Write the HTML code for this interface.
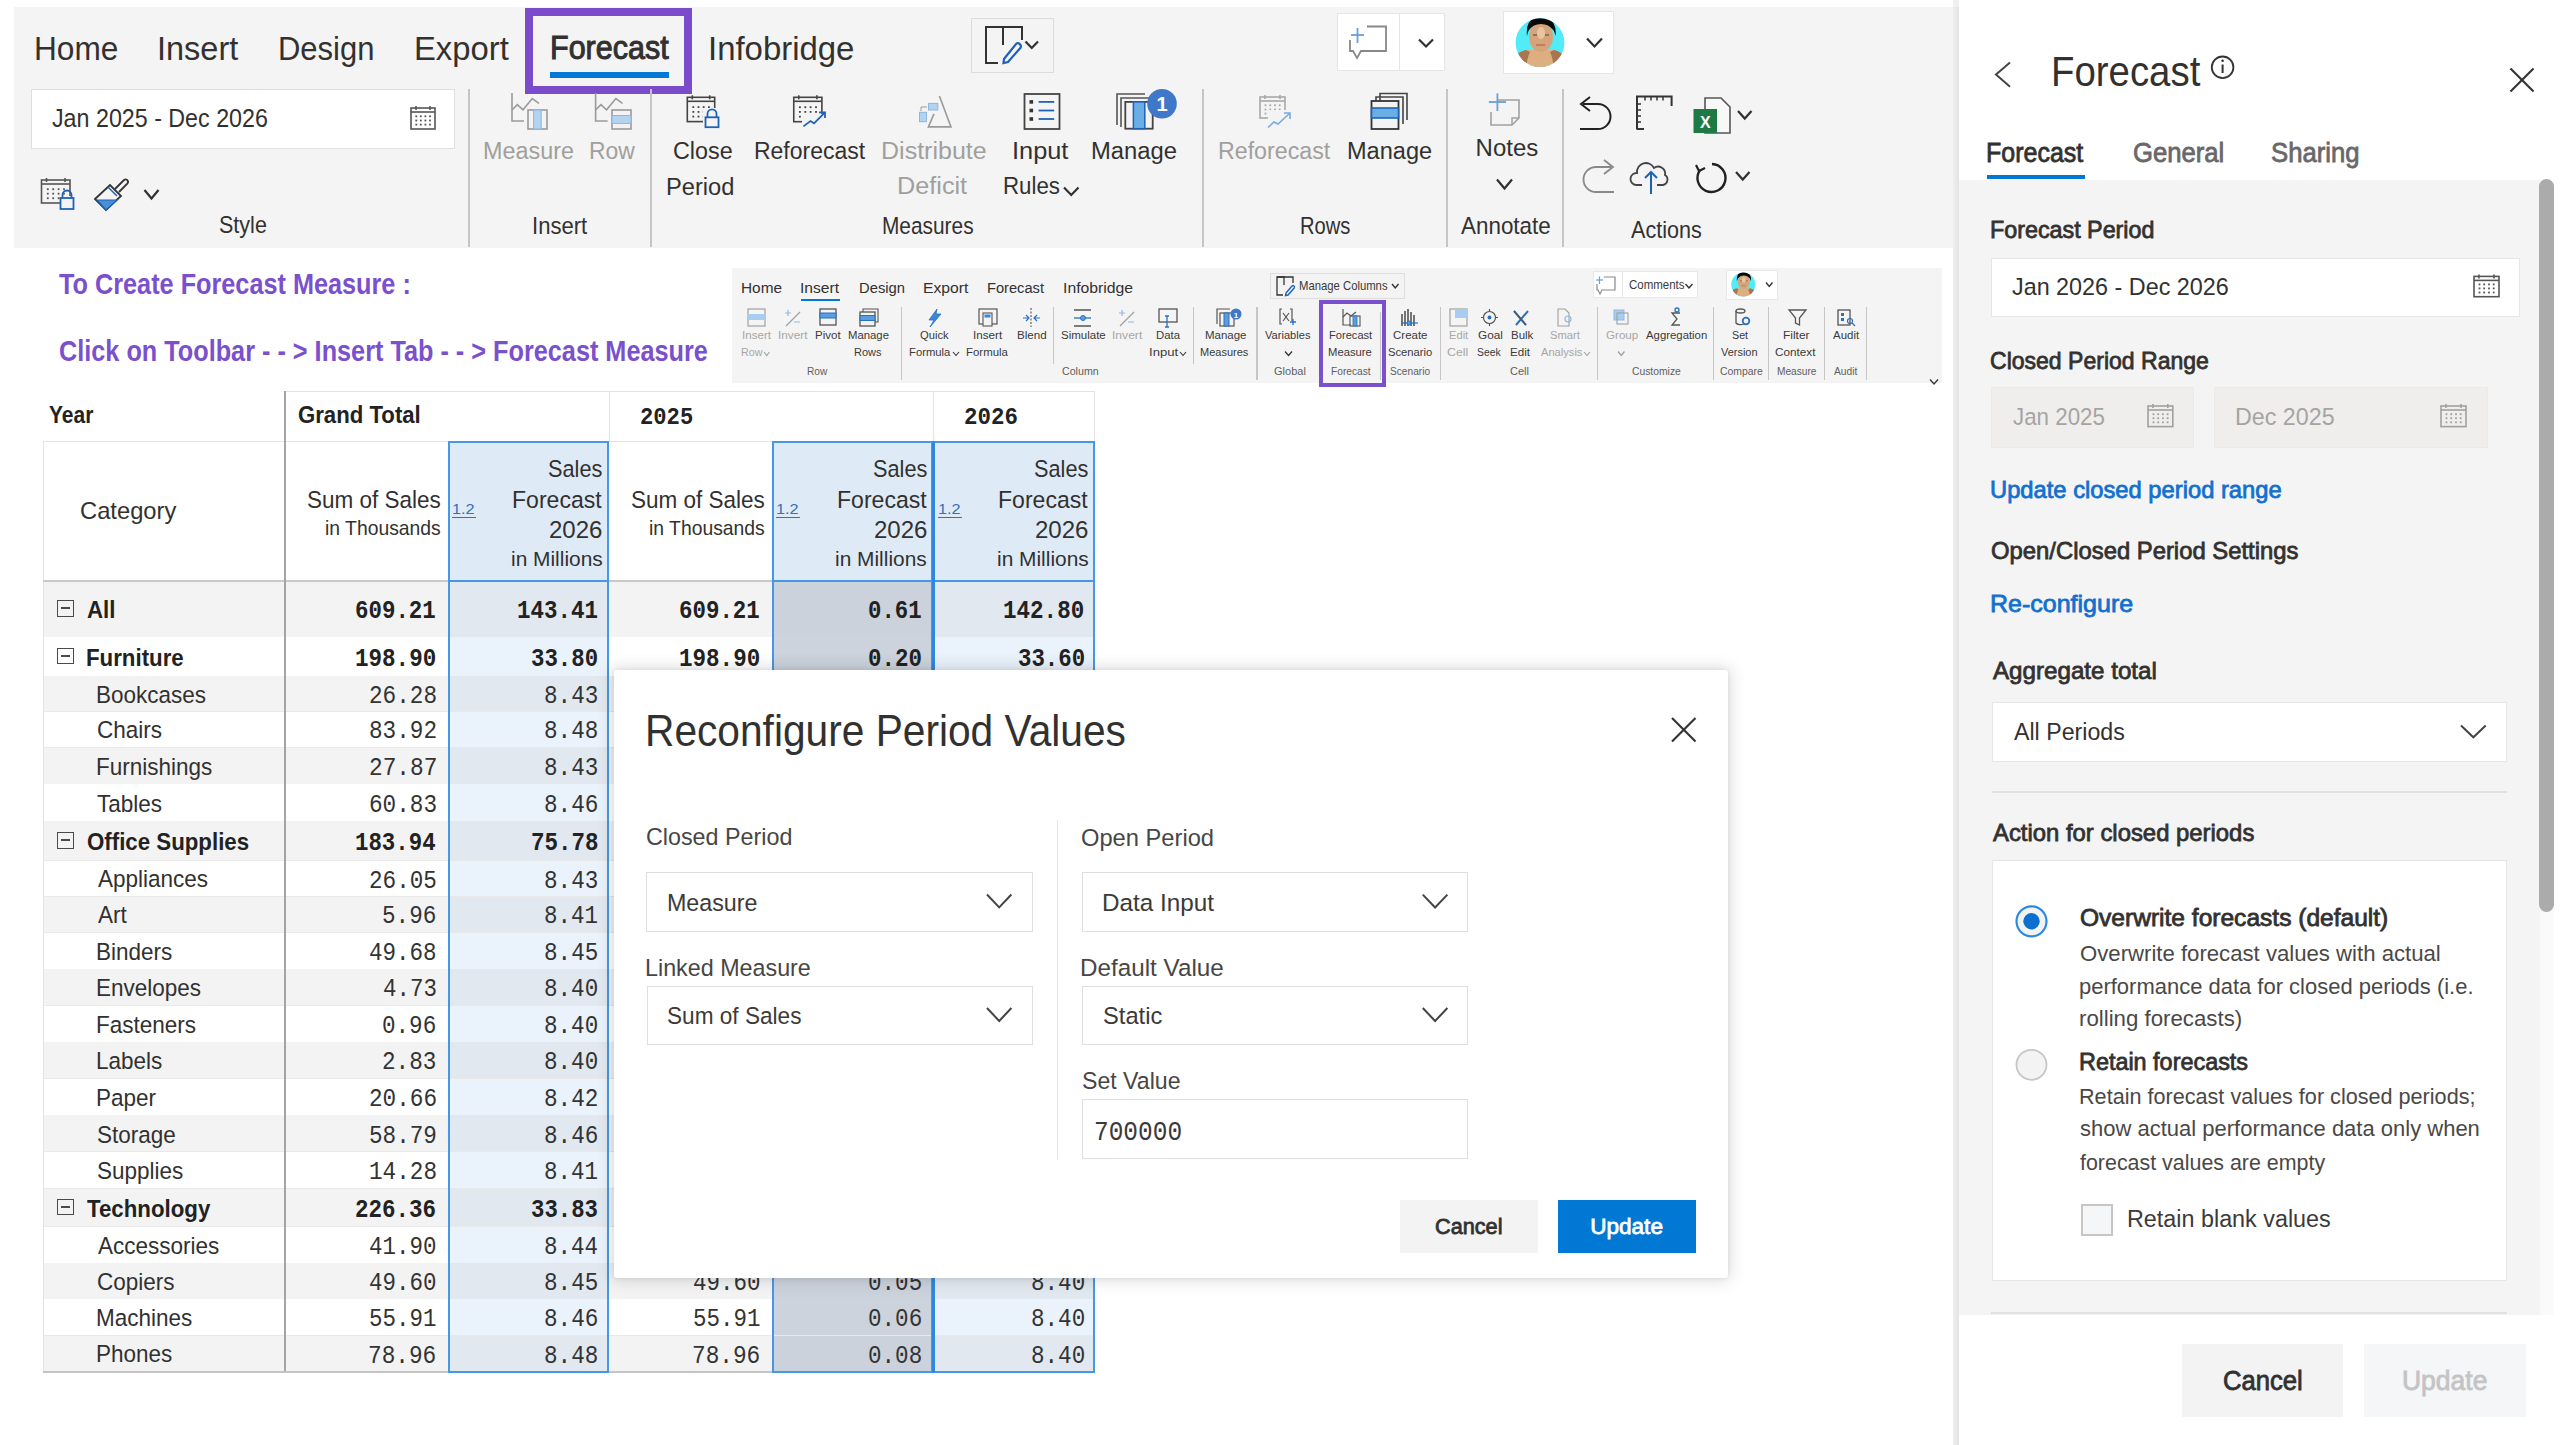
<!DOCTYPE html>
<html><head><meta charset="utf-8"><title>Forecast</title>
<style>
html,body{margin:0;padding:0;width:2560px;height:1445px;overflow:hidden;background:#ffffff;}
body{position:relative;font-family:"Liberation Sans",sans-serif;}
.t{position:absolute;white-space:nowrap;line-height:1;transform-origin:0 0;}
.r{position:absolute;}
</style></head><body>
<div class="r" style="left:14.0px;top:7.0px;width:1939.0px;height:241.0px;background:#f4f4f4;"></div>
<div class="t" style="left:34.0px;top:32.0px;font-size:33.43px;color:#323130;transform:scaleX(0.946);">Home</div>
<div class="t" style="left:157.0px;top:32.0px;font-size:33.43px;color:#323130;transform:scaleX(0.972);">Insert</div>
<div class="t" style="left:278.4px;top:32.0px;font-size:33.43px;color:#323130;transform:scaleX(0.927);">Design</div>
<div class="t" style="left:413.5px;top:32.0px;font-size:33.43px;color:#323130;transform:scaleX(0.981);">Export</div>
<div class="t" style="left:549.5px;top:31.7px;font-size:32.85px;color:#323130;transform:scaleX(0.929);-webkit-text-stroke:1.0px #323130;">Forecast</div>
<div class="t" style="left:708.0px;top:32.0px;font-size:33.43px;color:#323130;transform:scaleX(0.985);">Infobridge</div>
<div class="r" style="left:550.0px;top:72.3px;width:119.0px;height:5.4px;background:#0078d4;"></div>
<div class="r" style="left:524.5px;top:8.2px;width:167.5px;height:85.6px;border:8px solid #7a4bcb;box-sizing:border-box;"></div>
<div class="r" style="left:31.0px;top:89.0px;width:424.0px;height:60.0px;background:#ffffff;border:1px solid #e1dfdd;box-sizing:border-box;"></div>
<div class="t" style="left:52.2px;top:106.4px;font-size:25.44px;color:#323130;transform:scaleX(0.914);">Jan 2025 - Dec 2026</div>
<div class="r" style="left:467.5px;top:89.0px;width:2.0px;height:158.0px;background:#c8c6c4;"></div>
<div class="r" style="left:650.0px;top:89.0px;width:2.0px;height:158.0px;background:#c8c6c4;"></div>
<div class="r" style="left:1202.0px;top:89.0px;width:2.0px;height:158.0px;background:#c8c6c4;"></div>
<div class="r" style="left:1445.5px;top:89.0px;width:2.0px;height:158.0px;background:#c8c6c4;"></div>
<div class="r" style="left:1561.5px;top:89.0px;width:2.0px;height:158.0px;background:#c8c6c4;"></div>
<div class="t" style="left:219.0px;top:214.2px;font-size:23.26px;color:#323130;transform:scaleX(0.926);">Style</div>
<div class="t" style="left:483.1px;top:138.6px;font-size:23.98px;color:#a19f9d;transform:scaleX(0.975);">Measure</div>
<div class="t" style="left:589.1px;top:138.6px;font-size:23.98px;color:#a19f9d;transform:scaleX(0.956);">Row</div>
<div class="t" style="left:532.0px;top:214.6px;font-size:23.26px;color:#323130;transform:scaleX(0.950);">Insert</div>
<div class="t" style="left:672.8px;top:138.6px;font-size:23.98px;color:#323130;transform:scaleX(0.974);">Close</div>
<div class="t" style="left:666.0px;top:174.9px;font-size:23.98px;color:#323130;transform:scaleX(0.987);">Period</div>
<div class="t" style="left:754.1px;top:138.6px;font-size:23.98px;color:#323130;transform:scaleX(0.958);">Reforecast</div>
<div class="t" style="left:881.3px;top:139.0px;font-size:23.98px;color:#a19f9d;transform:scaleX(1.044);">Distribute</div>
<div class="t" style="left:896.6px;top:174.1px;font-size:23.98px;color:#a19f9d;transform:scaleX(1.053);">Deficit</div>
<div class="t" style="left:1012.4px;top:139.0px;font-size:23.98px;color:#323130;transform:scaleX(1.058);">Input</div>
<div class="t" style="left:1002.8px;top:174.1px;font-size:23.98px;color:#323130;transform:scaleX(0.930);">Rules</div>
<div class="t" style="left:1091.0px;top:139.0px;font-size:23.98px;color:#323130;transform:scaleX(0.992);">Manage</div>
<div class="t" style="left:881.7px;top:214.6px;font-size:23.26px;color:#323130;transform:scaleX(0.897);">Measures</div>
<div class="t" style="left:1217.8px;top:139.0px;font-size:23.98px;color:#a19f9d;transform:scaleX(0.968);">Reforecast</div>
<div class="t" style="left:1346.7px;top:139.0px;font-size:23.98px;color:#323130;transform:scaleX(0.982);">Manage</div>
<div class="t" style="left:1300.1px;top:214.6px;font-size:23.26px;color:#323130;transform:scaleX(0.866);">Rows</div>
<div class="t" style="left:1475.6px;top:136.0px;font-size:23.98px;color:#323130;">Notes</div>
<div class="t" style="left:1460.9px;top:214.8px;font-size:23.26px;color:#323130;transform:scaleX(0.964);">Annotate</div>
<div class="t" style="left:1630.9px;top:218.9px;font-size:23.26px;color:#323130;transform:scaleX(0.928);">Actions</div>
<div class="r" style="left:970.6px;top:18.3px;width:83.0px;height:54.7px;background:#f4f4f4;border:1px solid #dcdcdc;box-sizing:border-box;"></div>
<div class="r" style="left:1337.0px;top:13.4px;width:107.7px;height:58.1px;background:#ffffff;border:1px solid #e5e5e5;box-sizing:border-box;"></div>
<div class="r" style="left:1398.5px;top:13.4px;width:1.0px;height:58.1px;background:#e5e5e5;"></div>
<div class="r" style="left:1503.0px;top:11.2px;width:110.7px;height:62.8px;background:#ffffff;border:1px solid #e5e5e5;box-sizing:border-box;"></div>
<svg class="r" style="left:0;top:0" width="1960" height="260" viewBox="0 0 1960 260" fill="none"><rect x="411" y="108" width="24" height="21" stroke="#555" stroke-width="1.6" fill="none"/><line x1="411" y1="112" x2="435" y2="112" stroke="#555" stroke-width="1.6"/><line x1="416" y1="106" x2="416" y2="110" stroke="#555" stroke-width="1.6"/><line x1="430" y1="106" x2="430" y2="110" stroke="#555" stroke-width="1.6"/><rect x="415.4" y="115.4" width="1.8" height="1.8" fill="#555"/><rect x="415.4" y="119.6" width="1.8" height="1.8" fill="#555"/><rect x="415.4" y="123.7" width="1.8" height="1.8" fill="#555"/><rect x="419.9" y="115.4" width="1.8" height="1.8" fill="#555"/><rect x="419.9" y="119.6" width="1.8" height="1.8" fill="#555"/><rect x="419.9" y="123.7" width="1.8" height="1.8" fill="#555"/><rect x="424.5" y="115.4" width="1.8" height="1.8" fill="#555"/><rect x="424.5" y="119.6" width="1.8" height="1.8" fill="#555"/><rect x="424.5" y="123.7" width="1.8" height="1.8" fill="#555"/><rect x="429.1" y="115.4" width="1.8" height="1.8" fill="#555"/><rect x="429.1" y="119.6" width="1.8" height="1.8" fill="#555"/><rect x="429.1" y="123.7" width="1.8" height="1.8" fill="#555"/><rect x="41.5" y="180" width="28.5" height="23" stroke="#555" stroke-width="1.6" fill="none"/><line x1="41.5" y1="184" x2="70" y2="184" stroke="#555" stroke-width="1.6"/><line x1="46.5" y1="178" x2="46.5" y2="182" stroke="#555" stroke-width="1.6"/><line x1="65" y1="178" x2="65" y2="182" stroke="#555" stroke-width="1.6"/><rect x="46.9" y="188.3" width="1.8" height="1.8" fill="#555"/><rect x="46.9" y="192.8" width="1.8" height="1.8" fill="#555"/><rect x="46.9" y="197.3" width="1.8" height="1.8" fill="#555"/><rect x="52.3" y="188.3" width="1.8" height="1.8" fill="#555"/><rect x="52.3" y="192.8" width="1.8" height="1.8" fill="#555"/><rect x="52.3" y="197.3" width="1.8" height="1.8" fill="#555"/><rect x="57.7" y="188.3" width="1.8" height="1.8" fill="#555"/><rect x="57.7" y="192.8" width="1.8" height="1.8" fill="#555"/><rect x="57.7" y="197.3" width="1.8" height="1.8" fill="#555"/><rect x="63.1" y="188.3" width="1.8" height="1.8" fill="#555"/><rect x="63.1" y="192.8" width="1.8" height="1.8" fill="#555"/><rect x="63.1" y="197.3" width="1.8" height="1.8" fill="#555"/><rect x="60" y="196" width="13" height="13" fill="#f3f3f3"/><rect x="60.5" y="198" width="13" height="11" stroke="#1e62b8" stroke-width="1.8" fill="none"/><path d="M62.5 198 v-3 a4.5 4.5 0 0 1 9 0 v3" stroke="#1e62b8" stroke-width="1.8" fill="none"/><path d="M95 199 L110 185 L121 196 L106 210 Z" stroke="#333" stroke-width="1.8" fill="none"/><path d="M97 200 L117 200 L106 210 Z" fill="#4a90d9" stroke="#1e62b8" stroke-width="1.2"/><path d="M115 189 L124 180 a2.5 2.5 0 0 1 3.5 3.5 L119 192" stroke="#333" stroke-width="1.8" fill="none"/><line x1="108" y1="187" x2="117" y2="196" stroke="#1e62b8" stroke-width="1.5"/><polyline points="144.5,190 151.5,198.5 158.5,190" stroke="#323130" stroke-width="2.2" fill="none"/><polyline points="512,93 512,121 524,121" stroke="#9a9a9a" stroke-width="1.6" fill="none"/><polyline points="512,110 517.3,104.7 523,109.8 532.3,98.6 538.9,103.3" stroke="#9a9a9a" stroke-width="1.6" fill="none"/><rect x="528" y="110" width="19" height="19" stroke="#9a9a9a" stroke-width="1.6" fill="#f3f3f3"/><rect x="533.6" y="110" width="7.6" height="19" fill="#b3d3f0" stroke="#8db6e2" stroke-width="1"/><polyline points="595.6,93 595.6,121 607.6,121" stroke="#9a9a9a" stroke-width="1.6" fill="none"/><polyline points="595.6,110 600.9,104.7 606.6,109.8 615.9,98.6 622.5,103.3" stroke="#9a9a9a" stroke-width="1.6" fill="none"/><rect x="612" y="110" width="19" height="19" stroke="#9a9a9a" stroke-width="1.6" fill="#f3f3f3"/><rect x="612" y="115.5" width="19" height="7.9" fill="#b3d3f0" stroke="#8db6e2" stroke-width="1"/><rect x="687.3" y="97.3" width="27.40000000000009" height="24.299999999999997" stroke="#444" stroke-width="1.6" fill="none"/><line x1="687.3" y1="101.3" x2="714.7" y2="101.3" stroke="#444" stroke-width="1.6"/><line x1="692.3" y1="95.3" x2="692.3" y2="99.3" stroke="#444" stroke-width="1.6"/><line x1="709.7" y1="95.3" x2="709.7" y2="99.3" stroke="#444" stroke-width="1.6"/><rect x="692.4" y="106.2" width="1.8" height="1.8" fill="#444"/><rect x="692.4" y="111.0" width="1.8" height="1.8" fill="#444"/><rect x="692.4" y="115.7" width="1.8" height="1.8" fill="#444"/><rect x="697.6" y="106.2" width="1.8" height="1.8" fill="#444"/><rect x="697.6" y="111.0" width="1.8" height="1.8" fill="#444"/><rect x="697.6" y="115.7" width="1.8" height="1.8" fill="#444"/><rect x="702.8" y="106.2" width="1.8" height="1.8" fill="#444"/><rect x="702.8" y="111.0" width="1.8" height="1.8" fill="#444"/><rect x="702.8" y="115.7" width="1.8" height="1.8" fill="#444"/><rect x="708.0" y="106.2" width="1.8" height="1.8" fill="#444"/><rect x="708.0" y="111.0" width="1.8" height="1.8" fill="#444"/><rect x="708.0" y="115.7" width="1.8" height="1.8" fill="#444"/><rect x="703" y="108" width="17" height="20" fill="#f3f3f3"/><rect x="705.5" y="117.3" width="13" height="9.9" stroke="#1e62b8" stroke-width="1.8" fill="none"/><path d="M707.5 117.3 v-3.5 a4.5 4.5 0 0 1 9 0 v3.5" stroke="#1e62b8" stroke-width="1.8" fill="none"/><rect x="793.75" y="97.3" width="28.149999999999977" height="24.400000000000006" stroke="#444" stroke-width="1.6" fill="none"/><line x1="793.75" y1="101.3" x2="821.9" y2="101.3" stroke="#444" stroke-width="1.6"/><line x1="798.75" y1="95.3" x2="798.75" y2="99.3" stroke="#444" stroke-width="1.6"/><line x1="816.9" y1="95.3" x2="816.9" y2="99.3" stroke="#444" stroke-width="1.6"/><rect x="799.0" y="106.3" width="1.8" height="1.8" fill="#444"/><rect x="799.0" y="111.0" width="1.8" height="1.8" fill="#444"/><rect x="799.0" y="115.8" width="1.8" height="1.8" fill="#444"/><rect x="804.4" y="106.3" width="1.8" height="1.8" fill="#444"/><rect x="804.4" y="111.0" width="1.8" height="1.8" fill="#444"/><rect x="804.4" y="115.8" width="1.8" height="1.8" fill="#444"/><rect x="809.7" y="106.3" width="1.8" height="1.8" fill="#444"/><rect x="809.7" y="111.0" width="1.8" height="1.8" fill="#444"/><rect x="809.7" y="115.8" width="1.8" height="1.8" fill="#444"/><rect x="815.1" y="106.3" width="1.8" height="1.8" fill="#444"/><rect x="815.1" y="111.0" width="1.8" height="1.8" fill="#444"/><rect x="815.1" y="115.8" width="1.8" height="1.8" fill="#444"/><path d="M802 114 L826 114 L826 128 L802 128 Z" fill="#f3f3f3"/><polyline points="803.4,126.4 810.5,121 814,123.3 825,112.3" stroke="#1e62b8" stroke-width="1.8" fill="none"/><polyline points="819,112.3 825,112.3 825,118" stroke="#1e62b8" stroke-width="1.8" fill="none"/><path d="M939.4 96 L951 126.9 L928.4 126.9 L934 113.9" stroke="#9a9a9a" stroke-width="1.6" fill="none"/><rect x="928.5" y="103.4" width="9.3" height="6.6" fill="#b3d3f0" stroke="#8db6e2"/><rect x="919.5" y="112.3" width="7" height="9.4" fill="#b3d3f0" stroke="#8db6e2"/><path d="M921 111 v-4 h6" stroke="#9a9a9a" stroke-width="1"/><rect x="1024.5" y="94" width="35" height="35" stroke="#444" stroke-width="1.8" fill="none"/><rect x="1029.5" y="100.10000000000001" width="3.6" height="3.6" fill="#333"/><line x1="1038.6" y1="101.9" x2="1054.2" y2="101.9" stroke="#1e62b8" stroke-width="1.8"/><rect x="1029.5" y="108.7" width="3.6" height="3.6" fill="#333"/><line x1="1038.6" y1="110.5" x2="1054.2" y2="110.5" stroke="#1e62b8" stroke-width="1.8"/><rect x="1029.5" y="117.2" width="3.6" height="3.6" fill="#333"/><line x1="1038.6" y1="119" x2="1054.2" y2="119" stroke="#1e62b8" stroke-width="1.8"/><path d="M1117 125 V94 H1145" stroke="#555" stroke-width="1.6"/><path d="M1121 127 V98 H1149" stroke="#555" stroke-width="1.6"/><rect x="1125.3" y="101.9" width="27.4" height="26.8" stroke="#444" stroke-width="1.8" fill="#f3f3f3"/><rect x="1133.4" y="101.9" width="11.4" height="26.8" fill="#6aaee6" stroke="#1e62b8" stroke-width="1.5"/><circle cx="1162" cy="103.75" r="14.8" fill="#3f78c8"/><text x="1162" y="111" font-family="Liberation Sans" font-weight="700" font-size="20" fill="#fff" text-anchor="middle">1</text><path d="M1000 27 H986 V63 H998" stroke="#333" stroke-width="2" fill="none"/><path d="M986 27 H1022 V40" stroke="#333" stroke-width="2" fill="none"/><line x1="1003" y1="27" x2="1003" y2="45" stroke="#333" stroke-width="2"/><path d="M1004 59 L1016 44 a3 3 0 0 1 4.5 3.8 L1008 62 L1003.5 63 Z" stroke="#1e62b8" stroke-width="2.2" fill="none"/><polyline points="1025.5,41.5 1031.75,48 1038,41.5" stroke="#323130" stroke-width="2.2" fill="none"/><path d="M1367 26.5 H1386 V51 H1361 L1357 58 L1353 51 H1350 V40" stroke="#888" stroke-width="1.8" fill="none"/><line x1="1351" y1="35" x2="1364" y2="35" stroke="#6a9fd8" stroke-width="1.8"/><line x1="1357.5" y1="28" x2="1357.5" y2="43" stroke="#6a9fd8" stroke-width="1.8"/><polyline points="1419,39.5 1426.0,46.5 1433,39.5" stroke="#323130" stroke-width="2.2" fill="none"/><clipPath id="avc"><circle cx="1540" cy="42.7" r="24.4"/></clipPath><g clip-path="url(#avc)"><rect x="1515" y="18" width="50" height="50" fill="#52ecf8"/><path d="M1510 70 Q1512 53 1528 50 L1552 50 Q1568 53 1570 70 Z" fill="#dcae80"/><path d="M1510 70 Q1512 53 1526 50 L1530 52 Q1526 60 1527 70Z" fill="#a87452"/><path d="M1570 70 Q1568 53 1554 50 L1550 52 Q1554 60 1553 70Z" fill="#a87452"/><path d="M1527 36 Q1525 17 1541 17 Q1557 17 1555.6 36 Q1553 24 1541 23.5 Q1529 24 1527 36Z" fill="#0a0808"/><ellipse cx="1541" cy="37" rx="12" ry="15" fill="#d6a47a"/><path d="M1529 30 Q1530 20 1541 21 Q1552 20 1553 30 Q1549 24 1541 24 Q1533 24 1529 30Z" fill="#0a0808"/><ellipse cx="1541" cy="33" rx="4" ry="6" fill="#e8c4a0"/><path d="M1536 45 h9" stroke="#b8705a" stroke-width="1.3"/><path d="M1533 35 h4 M1545 35 h4" stroke="#7a6050" stroke-width="1.4"/></g><polyline points="1587,38.5 1594.5,46.5 1602,38.5" stroke="#323130" stroke-width="2.2" fill="none"/><rect x="1260" y="97" width="25" height="21" stroke="#a8a8a8" stroke-width="1.6" fill="none"/><line x1="1260" y1="101" x2="1285" y2="101" stroke="#a8a8a8" stroke-width="1.6"/><line x1="1265" y1="95" x2="1265" y2="99" stroke="#a8a8a8" stroke-width="1.6"/><line x1="1280" y1="95" x2="1280" y2="99" stroke="#a8a8a8" stroke-width="1.6"/><rect x="1264.6" y="104.4" width="1.8" height="1.8" fill="#a8a8a8"/><rect x="1264.6" y="108.6" width="1.8" height="1.8" fill="#a8a8a8"/><rect x="1264.6" y="112.7" width="1.8" height="1.8" fill="#a8a8a8"/><rect x="1269.3" y="104.4" width="1.8" height="1.8" fill="#a8a8a8"/><rect x="1269.3" y="108.6" width="1.8" height="1.8" fill="#a8a8a8"/><rect x="1269.3" y="112.7" width="1.8" height="1.8" fill="#a8a8a8"/><rect x="1274.1" y="104.4" width="1.8" height="1.8" fill="#a8a8a8"/><rect x="1274.1" y="108.6" width="1.8" height="1.8" fill="#a8a8a8"/><rect x="1274.1" y="112.7" width="1.8" height="1.8" fill="#a8a8a8"/><rect x="1278.8" y="104.4" width="1.8" height="1.8" fill="#a8a8a8"/><rect x="1278.8" y="108.6" width="1.8" height="1.8" fill="#a8a8a8"/><rect x="1278.8" y="112.7" width="1.8" height="1.8" fill="#a8a8a8"/><rect x="1268" y="110" width="24" height="19" fill="#f3f3f3"/><polyline points="1268,127.5 1274,122 1278,124 1290,113" stroke="#7aaae0" stroke-width="1.6" fill="none"/><polyline points="1284,113 1290,113 1290,119" stroke="#7aaae0" stroke-width="1.6" fill="none"/><path d="M1380 124 V93.5 H1407 V120" stroke="#444" stroke-width="1.6" fill="none"/><path d="M1376 126 V97 H1403 V124" stroke="#444" stroke-width="1.6" fill="none"/><rect x="1371.5" y="101" width="27" height="28" stroke="#333" stroke-width="1.8" fill="#f3f3f3"/><rect x="1371.5" y="108" width="27" height="10" fill="#6aaee6" stroke="#1e62b8" stroke-width="1.6"/><path d="M1498 100 H1519 V118 L1512 125 H1491 V112" stroke="#a0a0a0" stroke-width="1.6" fill="none"/><path d="M1512 125 V118 H1519" stroke="#a0a0a0" stroke-width="1.4" fill="none"/><line x1="1488.8" y1="102" x2="1506" y2="102" stroke="#6a9fd8" stroke-width="1.8"/><line x1="1497.4" y1="93.4" x2="1497.4" y2="111" stroke="#6a9fd8" stroke-width="1.8"/><polyline points="1497,179.5 1504.5,188.5 1512,179.5" stroke="#323130" stroke-width="2.2" fill="none"/><path d="M1583 104 H1598 A12.5 12.5 0 0 1 1598 129 H1580" stroke="#222" stroke-width="2" fill="none"/><polyline points="1590,97 1581,104 1590,111" stroke="#222" stroke-width="2" fill="none"/><path d="M1637 129.6 V96.5 H1671.6 V106" stroke="#333" stroke-width="2" fill="none"/><line x1="1637" y1="129" x2="1644" y2="129" stroke="#333" stroke-width="2"/><line x1="1645" y1="96.5" x2="1645" y2="100.5" stroke="#333" stroke-width="1.5"/><line x1="1651" y1="96.5" x2="1651" y2="100.5" stroke="#333" stroke-width="1.5"/><line x1="1657" y1="96.5" x2="1657" y2="100.5" stroke="#333" stroke-width="1.5"/><line x1="1663" y1="96.5" x2="1663" y2="100.5" stroke="#333" stroke-width="1.5"/><line x1="1637" y1="104" x2="1641" y2="104" stroke="#333" stroke-width="1.5"/><line x1="1637" y1="110" x2="1641" y2="110" stroke="#333" stroke-width="1.5"/><line x1="1637" y1="116" x2="1641" y2="116" stroke="#333" stroke-width="1.5"/><line x1="1637" y1="122" x2="1641" y2="122" stroke="#333" stroke-width="1.5"/><path d="M1705 98 H1721 L1730 107 V133 H1705 Z" stroke="#555" stroke-width="1.6" fill="#f8f8f8"/><rect x="1693.5" y="109" width="23.5" height="24" fill="#1d7a45"/><text x="1705.3" y="127.5" font-family="Liberation Sans" font-weight="700" font-size="16" fill="#fff" text-anchor="middle">X</text><polyline points="1738,111 1744.75,118.5 1751.5,111" stroke="#323130" stroke-width="2.2" fill="none"/><path d="M1611 167 H1596 A12.5 12.5 0 0 0 1596 192 H1614" stroke="#888" stroke-width="1.8" fill="none"/><polyline points="1604,160 1613,167 1604,174" stroke="#888" stroke-width="1.8" fill="none"/><path d="M1642 185 H1636 A6 6 0 0 1 1637 173 A9 9 0 0 1 1654 168 A7 7 0 0 1 1665 175 A5.5 5.5 0 0 1 1663 185 H1657" stroke="#444" stroke-width="1.8" fill="none"/><line x1="1651" y1="172" x2="1651" y2="194" stroke="#1e62b8" stroke-width="2"/><polyline points="1645,178 1651,172 1657,178" stroke="#1e62b8" stroke-width="2" fill="none"/><path d="M1700 170 A14 14 0 1 0 1712 164" stroke="#222" stroke-width="2.4" fill="none"/><polyline points="1696,165 1699,171 1705,168" stroke="#222" stroke-width="2.2" fill="none"/><polyline points="1736,172 1742.75,179.5 1749.5,172" stroke="#323130" stroke-width="2.2" fill="none"/><polyline points="1064,187.5 1071.25,195 1078.5,187.5" stroke="#323130" stroke-width="2.2" fill="none"/></svg>
<div class="r" style="left:1953.0px;top:0.0px;width:6.0px;height:1445.0px;background:linear-gradient(90deg,#eeeeee,#e4e4e4);"></div>
<div class="r" style="left:1953.0px;top:0.0px;width:6.0px;height:7.0px;background:#f0f0f0;"></div>
<div class="r" style="left:1959.0px;top:179.7px;width:581.0px;height:1135.3px;background:#f4f4f4;"></div>
<div class="r" style="left:2540.0px;top:179.7px;width:14.0px;height:1135.3px;background:#fafafa;"></div>
<div class="r" style="left:2539.0px;top:179.0px;width:15.0px;height:733.0px;background:#ababab;border-radius:7.5px;"></div>
<div class="t" style="left:2050.6px;top:51.2px;font-size:41.72px;color:#323130;transform:scaleX(0.920);">Forecast</div>
<div class="t" style="left:1986.3px;top:138.9px;font-size:28.05px;color:#323130;transform:scaleX(0.891);-webkit-text-stroke:0.8px #323130;">Forecast</div>
<div class="t" style="left:2132.5px;top:138.9px;font-size:28.05px;color:#69676a;transform:scaleX(0.915);-webkit-text-stroke:0.8px #69676a;">General</div>
<div class="t" style="left:2270.8px;top:138.9px;font-size:28.05px;color:#69676a;transform:scaleX(0.916);-webkit-text-stroke:0.8px #69676a;">Sharing</div>
<div class="r" style="left:1987.0px;top:174.9px;width:97.6px;height:4.3px;background:#0078d4;"></div>
<div class="t" style="left:1990.1px;top:217.6px;font-size:24.71px;color:#323130;transform:scaleX(0.943);-webkit-text-stroke:0.8px #323130;">Forecast Period</div>
<div class="r" style="left:1991.3px;top:257.5px;width:528.7px;height:59.8px;background:#ffffff;border:1px solid #e6e6e6;box-sizing:border-box;"></div>
<div class="t" style="left:2012.2px;top:275.0px;font-size:24.71px;color:#323130;transform:scaleX(0.945);">Jan 2026 - Dec 2026</div>
<div class="t" style="left:1990.4px;top:348.7px;font-size:24.71px;color:#323130;transform:scaleX(0.932);-webkit-text-stroke:0.8px #323130;">Closed Period Range</div>
<div class="r" style="left:1991.0px;top:387.3px;width:202.7px;height:60.4px;background:#efeeed;border:1px solid #eaeaea;box-sizing:border-box;"></div>
<div class="r" style="left:2214.3px;top:387.3px;width:274.2px;height:60.4px;background:#efeeed;border:1px solid #eaeaea;box-sizing:border-box;"></div>
<div class="t" style="left:2013.1px;top:405.0px;font-size:24.71px;color:#a6a4a2;transform:scaleX(0.904);">Jan 2025</div>
<div class="t" style="left:2235.1px;top:405.0px;font-size:24.71px;color:#a6a4a2;transform:scaleX(0.942);">Dec 2025</div>
<div class="t" style="left:1990.2px;top:477.6px;font-size:24.71px;color:#1170cf;transform:scaleX(0.961);-webkit-text-stroke:0.8px #1170cf;">Update closed period range</div>
<div class="t" style="left:1990.9px;top:539.2px;font-size:24.71px;color:#323130;transform:scaleX(0.965);-webkit-text-stroke:0.8px #323130;">Open/Closed Period Settings</div>
<div class="t" style="left:1989.9px;top:591.5px;font-size:24.71px;color:#1170cf;transform:scaleX(1.012);-webkit-text-stroke:0.8px #1170cf;">Re-configure</div>
<div class="t" style="left:1992.7px;top:658.7px;font-size:24.71px;color:#323130;transform:scaleX(0.978);-webkit-text-stroke:0.8px #323130;">Aggregate total</div>
<div class="r" style="left:1991.6px;top:702.0px;width:515.2px;height:59.7px;background:#ffffff;border:1px solid #e6e6e6;box-sizing:border-box;"></div>
<div class="t" style="left:2013.9px;top:720.2px;font-size:23.98px;color:#323130;transform:scaleX(0.967);">All Periods</div>
<div class="r" style="left:1992.0px;top:791.4px;width:515.0px;height:2.0px;background:#e1e1e1;"></div>
<div class="t" style="left:1992.7px;top:821.0px;font-size:24.71px;color:#323130;transform:scaleX(0.966);-webkit-text-stroke:0.8px #323130;">Action for closed periods</div>
<div class="r" style="left:1991.6px;top:860.4px;width:515.2px;height:420.8px;background:#ffffff;border:1px solid #e6e6e6;box-sizing:border-box;"></div>
<div class="t" style="left:2079.5px;top:906.1px;font-size:23.98px;color:#323130;transform:scaleX(1.024);-webkit-text-stroke:0.8px #323130;">Overwrite forecasts (default)</div>
<div class="t" style="left:2079.6px;top:942.9px;font-size:22.53px;color:#4a4846;transform:scaleX(0.984);">Overwrite forecast values with actual</div>
<div class="t" style="left:2079.3px;top:976.1px;font-size:22.53px;color:#4a4846;transform:scaleX(0.976);">performance data for closed periods (i.e.</div>
<div class="t" style="left:2079.3px;top:1008.4px;font-size:22.53px;color:#4a4846;transform:scaleX(0.988);">rolling forecasts)</div>
<div class="t" style="left:2078.8px;top:1050.2px;font-size:23.98px;color:#323130;transform:scaleX(0.976);-webkit-text-stroke:0.8px #323130;">Retain forecasts</div>
<div class="t" style="left:2078.9px;top:1085.8px;font-size:22.53px;color:#4a4846;transform:scaleX(0.960);">Retain forecast values for closed periods;</div>
<div class="t" style="left:2080.1px;top:1118.4px;font-size:22.53px;color:#4a4846;transform:scaleX(0.977);">show actual performance data only when</div>
<div class="t" style="left:2080.4px;top:1152.4px;font-size:22.53px;color:#4a4846;transform:scaleX(0.951);">forecast values are empty</div>
<div class="r" style="left:2080.7px;top:1203.7px;width:32.1px;height:32.1px;background:#f5f6f8;border:2px solid #c8c6c4;box-sizing:border-box;"></div>
<div class="t" style="left:2127.3px;top:1207.2px;font-size:23.98px;color:#3b3a39;transform:scaleX(0.974);">Retain blank values</div>
<div class="r" style="left:1991.3px;top:1312.0px;width:515.7px;height:2.0px;background:#e1e1e1;"></div>
<div class="r" style="left:2181.5px;top:1344.0px;width:161.8px;height:73.3px;background:#f3f3f3;"></div>
<div class="t" style="left:2223.3px;top:1367.6px;font-size:27.03px;color:#323130;transform:scaleX(0.949);-webkit-text-stroke:0.8px #323130;">Cancel</div>
<div class="r" style="left:2363.8px;top:1344.0px;width:162.2px;height:73.3px;background:#f5f6f8;"></div>
<div class="t" style="left:2401.7px;top:1367.6px;font-size:27.03px;color:#c4c4c4;transform:scaleX(0.980);-webkit-text-stroke:0.8px #c4c4c4;">Update</div>
<svg class="r" style="left:0;top:0" width="2560" height="1445" viewBox="0 0 2560 1445" fill="none"><polyline points="2010,62.5 1996,74.6 2010,86.7" stroke="#444" stroke-width="2" fill="none"/><circle cx="2222.6" cy="67.3" r="10.8" stroke="#333" stroke-width="1.8" fill="none"/><line x1="2222.6" y1="64.5" x2="2222.6" y2="73" stroke="#333" stroke-width="2"/><circle cx="2222.6" cy="60.8" r="1.3" fill="#333"/><line x1="2510.5" y1="68.5" x2="2533.5" y2="91.5" stroke="#333" stroke-width="2.2"/><line x1="2533.5" y1="68.5" x2="2510.5" y2="91.5" stroke="#333" stroke-width="2.2"/><rect x="2474" y="276.4" width="25" height="20.30000000000001" stroke="#555" stroke-width="1.6" fill="none"/><line x1="2474" y1="280.4" x2="2499" y2="280.4" stroke="#555" stroke-width="1.6"/><line x1="2479" y1="274.4" x2="2479" y2="278.4" stroke="#555" stroke-width="1.6"/><line x1="2494" y1="274.4" x2="2494" y2="278.4" stroke="#555" stroke-width="1.6"/><rect x="2478.6" y="283.5" width="1.8" height="1.8" fill="#555"/><rect x="2478.6" y="287.5" width="1.8" height="1.8" fill="#555"/><rect x="2478.6" y="291.6" width="1.8" height="1.8" fill="#555"/><rect x="2483.3" y="283.5" width="1.8" height="1.8" fill="#555"/><rect x="2483.3" y="287.5" width="1.8" height="1.8" fill="#555"/><rect x="2483.3" y="291.6" width="1.8" height="1.8" fill="#555"/><rect x="2488.1" y="283.5" width="1.8" height="1.8" fill="#555"/><rect x="2488.1" y="287.5" width="1.8" height="1.8" fill="#555"/><rect x="2488.1" y="291.6" width="1.8" height="1.8" fill="#555"/><rect x="2492.8" y="283.5" width="1.8" height="1.8" fill="#555"/><rect x="2492.8" y="287.5" width="1.8" height="1.8" fill="#555"/><rect x="2492.8" y="291.6" width="1.8" height="1.8" fill="#555"/><rect x="2148" y="406" width="24.800000000000182" height="20.600000000000023" stroke="#a0a0a0" stroke-width="1.6" fill="none"/><line x1="2148" y1="410" x2="2172.8" y2="410" stroke="#a0a0a0" stroke-width="1.6"/><line x1="2153" y1="404" x2="2153" y2="408" stroke="#a0a0a0" stroke-width="1.6"/><line x1="2167.8" y1="404" x2="2167.8" y2="408" stroke="#a0a0a0" stroke-width="1.6"/><rect x="2152.6" y="413.3" width="1.8" height="1.8" fill="#a0a0a0"/><rect x="2152.6" y="417.3" width="1.8" height="1.8" fill="#a0a0a0"/><rect x="2152.6" y="421.4" width="1.8" height="1.8" fill="#a0a0a0"/><rect x="2157.3" y="413.3" width="1.8" height="1.8" fill="#a0a0a0"/><rect x="2157.3" y="417.3" width="1.8" height="1.8" fill="#a0a0a0"/><rect x="2157.3" y="421.4" width="1.8" height="1.8" fill="#a0a0a0"/><rect x="2162.0" y="413.3" width="1.8" height="1.8" fill="#a0a0a0"/><rect x="2162.0" y="417.3" width="1.8" height="1.8" fill="#a0a0a0"/><rect x="2162.0" y="421.4" width="1.8" height="1.8" fill="#a0a0a0"/><rect x="2166.7" y="413.3" width="1.8" height="1.8" fill="#a0a0a0"/><rect x="2166.7" y="417.3" width="1.8" height="1.8" fill="#a0a0a0"/><rect x="2166.7" y="421.4" width="1.8" height="1.8" fill="#a0a0a0"/><rect x="2441" y="406" width="25" height="20.600000000000023" stroke="#a0a0a0" stroke-width="1.6" fill="none"/><line x1="2441" y1="410" x2="2466" y2="410" stroke="#a0a0a0" stroke-width="1.6"/><line x1="2446" y1="404" x2="2446" y2="408" stroke="#a0a0a0" stroke-width="1.6"/><line x1="2461" y1="404" x2="2461" y2="408" stroke="#a0a0a0" stroke-width="1.6"/><rect x="2445.6" y="413.3" width="1.8" height="1.8" fill="#a0a0a0"/><rect x="2445.6" y="417.3" width="1.8" height="1.8" fill="#a0a0a0"/><rect x="2445.6" y="421.4" width="1.8" height="1.8" fill="#a0a0a0"/><rect x="2450.3" y="413.3" width="1.8" height="1.8" fill="#a0a0a0"/><rect x="2450.3" y="417.3" width="1.8" height="1.8" fill="#a0a0a0"/><rect x="2450.3" y="421.4" width="1.8" height="1.8" fill="#a0a0a0"/><rect x="2455.1" y="413.3" width="1.8" height="1.8" fill="#a0a0a0"/><rect x="2455.1" y="417.3" width="1.8" height="1.8" fill="#a0a0a0"/><rect x="2455.1" y="421.4" width="1.8" height="1.8" fill="#a0a0a0"/><rect x="2459.8" y="413.3" width="1.8" height="1.8" fill="#a0a0a0"/><rect x="2459.8" y="417.3" width="1.8" height="1.8" fill="#a0a0a0"/><rect x="2459.8" y="421.4" width="1.8" height="1.8" fill="#a0a0a0"/><polyline points="2461,725.5 2473.35,737.3 2485.7,725.5" stroke="#444" stroke-width="2" fill="none"/><circle cx="2031.5" cy="921.3" r="15" stroke="#2a8ae0" stroke-width="2.2" fill="#f2f2f2"/><circle cx="2031.5" cy="921.3" r="8.2" fill="#0b6fd0"/><circle cx="2031.5" cy="1064.8" r="15" stroke="#c8c6c4" stroke-width="1.8" fill="#f3f3f3"/></svg>
<div class="r" style="left:285.0px;top:391.0px;width:810.0px;height:1.0px;background:#e3e3e3;"></div>
<div class="r" style="left:609.0px;top:391.0px;width:1.0px;height:50.0px;background:#e3e3e3;"></div>
<div class="r" style="left:933.0px;top:391.0px;width:1.0px;height:50.0px;background:#e3e3e3;"></div>
<div class="r" style="left:1094.0px;top:391.0px;width:1.0px;height:50.0px;background:#e3e3e3;"></div>
<div class="t" style="left:49.3px;top:403.9px;font-size:23.69px;font-weight:700;color:#222222;transform:scaleX(0.886);">Year</div>
<div class="t" style="left:298.4px;top:403.9px;font-size:23.69px;font-weight:700;color:#222222;transform:scaleX(0.936);">Grand Total</div>
<div class="t" style="left:639.7px;top:404.7px;font-size:24.78px;font-family:'Liberation Mono',monospace;font-weight:700;color:#222222;transform:scaleX(0.895);">2025</div>
<div class="t" style="left:963.7px;top:405.0px;font-size:24.78px;font-family:'Liberation Mono',monospace;font-weight:700;color:#222222;transform:scaleX(0.906);">2026</div>
<div class="r" style="left:43.0px;top:441.0px;width:1052.0px;height:1.0px;background:#e3e3e3;"></div>
<div class="r" style="left:43.0px;top:441.0px;width:1.0px;height:931.0px;background:#e3e3e3;"></div>
<div class="t" style="left:80.0px;top:500.1px;font-size:23.40px;color:#323130;transform:scaleX(1.015);">Category</div>
<div class="t" style="left:306.7px;top:488.7px;font-size:23.55px;color:#323130;transform:scaleX(0.956);">Sum of Sales</div>
<div class="t" style="left:324.7px;top:517.8px;font-size:20.78px;color:#323130;transform:scaleX(0.931);">in Thousands</div>
<div class="t" style="left:630.7px;top:488.7px;font-size:23.55px;color:#323130;transform:scaleX(0.956);">Sum of Sales</div>
<div class="t" style="left:648.7px;top:517.8px;font-size:20.78px;color:#323130;transform:scaleX(0.931);">in Thousands</div>
<div class="r" style="left:44.0px;top:580.5px;width:1051.0px;height:56.9px;background:#f3f3f3;"></div>
<div class="r" style="left:448.0px;top:580.5px;width:161.0px;height:56.9px;background:#e1e8f0;"></div>
<div class="r" style="left:933.0px;top:580.5px;width:162.0px;height:56.9px;background:#e1e8f0;"></div>
<div class="r" style="left:772.0px;top:580.5px;width:161.0px;height:56.9px;background:#cbd2db;"></div>
<div class="r" style="left:44.0px;top:636.9px;width:1051.0px;height:1.0px;background:#e9e9e9;"></div>
<div class="r" style="left:44.0px;top:637.4px;width:1051.0px;height:38.8px;background:#ffffff;"></div>
<div class="r" style="left:448.0px;top:637.4px;width:161.0px;height:38.8px;background:#eaf2fb;"></div>
<div class="r" style="left:933.0px;top:637.4px;width:162.0px;height:38.8px;background:#eaf2fb;"></div>
<div class="r" style="left:772.0px;top:637.4px;width:161.0px;height:38.8px;background:#ccd3dc;"></div>
<div class="r" style="left:44.0px;top:675.7px;width:1051.0px;height:1.0px;background:#e9e9e9;"></div>
<div class="r" style="left:44.0px;top:676.2px;width:1051.0px;height:35.3px;background:#f3f3f3;"></div>
<div class="r" style="left:448.0px;top:676.2px;width:161.0px;height:35.3px;background:#e1e8f0;"></div>
<div class="r" style="left:933.0px;top:676.2px;width:162.0px;height:35.3px;background:#e1e8f0;"></div>
<div class="r" style="left:772.0px;top:676.2px;width:161.0px;height:35.3px;background:#cbd2db;"></div>
<div class="r" style="left:44.0px;top:711.0px;width:1051.0px;height:1.0px;background:#e9e9e9;"></div>
<div class="r" style="left:44.0px;top:711.5px;width:1051.0px;height:36.0px;background:#ffffff;"></div>
<div class="r" style="left:448.0px;top:711.5px;width:161.0px;height:36.0px;background:#eaf2fb;"></div>
<div class="r" style="left:933.0px;top:711.5px;width:162.0px;height:36.0px;background:#eaf2fb;"></div>
<div class="r" style="left:772.0px;top:711.5px;width:161.0px;height:36.0px;background:#ccd3dc;"></div>
<div class="r" style="left:44.0px;top:747.0px;width:1051.0px;height:1.0px;background:#e9e9e9;"></div>
<div class="r" style="left:44.0px;top:747.5px;width:1051.0px;height:36.9px;background:#f3f3f3;"></div>
<div class="r" style="left:448.0px;top:747.5px;width:161.0px;height:36.9px;background:#e1e8f0;"></div>
<div class="r" style="left:933.0px;top:747.5px;width:162.0px;height:36.9px;background:#e1e8f0;"></div>
<div class="r" style="left:772.0px;top:747.5px;width:161.0px;height:36.9px;background:#cbd2db;"></div>
<div class="r" style="left:44.0px;top:783.9px;width:1051.0px;height:1.0px;background:#e9e9e9;"></div>
<div class="r" style="left:44.0px;top:784.4px;width:1051.0px;height:36.9px;background:#ffffff;"></div>
<div class="r" style="left:448.0px;top:784.4px;width:161.0px;height:36.9px;background:#eaf2fb;"></div>
<div class="r" style="left:933.0px;top:784.4px;width:162.0px;height:36.9px;background:#eaf2fb;"></div>
<div class="r" style="left:772.0px;top:784.4px;width:161.0px;height:36.9px;background:#ccd3dc;"></div>
<div class="r" style="left:44.0px;top:820.8px;width:1051.0px;height:1.0px;background:#e9e9e9;"></div>
<div class="r" style="left:44.0px;top:821.3px;width:1051.0px;height:39.3px;background:#f3f3f3;"></div>
<div class="r" style="left:448.0px;top:821.3px;width:161.0px;height:39.3px;background:#e1e8f0;"></div>
<div class="r" style="left:933.0px;top:821.3px;width:162.0px;height:39.3px;background:#e1e8f0;"></div>
<div class="r" style="left:772.0px;top:821.3px;width:161.0px;height:39.3px;background:#cbd2db;"></div>
<div class="r" style="left:44.0px;top:860.1px;width:1051.0px;height:1.0px;background:#e9e9e9;"></div>
<div class="r" style="left:44.0px;top:860.6px;width:1051.0px;height:35.9px;background:#ffffff;"></div>
<div class="r" style="left:448.0px;top:860.6px;width:161.0px;height:35.9px;background:#eaf2fb;"></div>
<div class="r" style="left:933.0px;top:860.6px;width:162.0px;height:35.9px;background:#eaf2fb;"></div>
<div class="r" style="left:772.0px;top:860.6px;width:161.0px;height:35.9px;background:#ccd3dc;"></div>
<div class="r" style="left:44.0px;top:896.0px;width:1051.0px;height:1.0px;background:#e9e9e9;"></div>
<div class="r" style="left:44.0px;top:896.5px;width:1051.0px;height:36.0px;background:#f3f3f3;"></div>
<div class="r" style="left:448.0px;top:896.5px;width:161.0px;height:36.0px;background:#e1e8f0;"></div>
<div class="r" style="left:933.0px;top:896.5px;width:162.0px;height:36.0px;background:#e1e8f0;"></div>
<div class="r" style="left:772.0px;top:896.5px;width:161.0px;height:36.0px;background:#cbd2db;"></div>
<div class="r" style="left:44.0px;top:932.0px;width:1051.0px;height:1.0px;background:#e9e9e9;"></div>
<div class="r" style="left:44.0px;top:932.5px;width:1051.0px;height:36.6px;background:#ffffff;"></div>
<div class="r" style="left:448.0px;top:932.5px;width:161.0px;height:36.6px;background:#eaf2fb;"></div>
<div class="r" style="left:933.0px;top:932.5px;width:162.0px;height:36.6px;background:#eaf2fb;"></div>
<div class="r" style="left:772.0px;top:932.5px;width:161.0px;height:36.6px;background:#ccd3dc;"></div>
<div class="r" style="left:44.0px;top:968.6px;width:1051.0px;height:1.0px;background:#e9e9e9;"></div>
<div class="r" style="left:44.0px;top:969.1px;width:1051.0px;height:36.6px;background:#f3f3f3;"></div>
<div class="r" style="left:448.0px;top:969.1px;width:161.0px;height:36.6px;background:#e1e8f0;"></div>
<div class="r" style="left:933.0px;top:969.1px;width:162.0px;height:36.6px;background:#e1e8f0;"></div>
<div class="r" style="left:772.0px;top:969.1px;width:161.0px;height:36.6px;background:#cbd2db;"></div>
<div class="r" style="left:44.0px;top:1005.1px;width:1051.0px;height:1.0px;background:#e9e9e9;"></div>
<div class="r" style="left:44.0px;top:1005.6px;width:1051.0px;height:36.6px;background:#ffffff;"></div>
<div class="r" style="left:448.0px;top:1005.6px;width:161.0px;height:36.6px;background:#eaf2fb;"></div>
<div class="r" style="left:933.0px;top:1005.6px;width:162.0px;height:36.6px;background:#eaf2fb;"></div>
<div class="r" style="left:772.0px;top:1005.6px;width:161.0px;height:36.6px;background:#ccd3dc;"></div>
<div class="r" style="left:44.0px;top:1041.7px;width:1051.0px;height:1.0px;background:#e9e9e9;"></div>
<div class="r" style="left:44.0px;top:1042.2px;width:1051.0px;height:36.6px;background:#f3f3f3;"></div>
<div class="r" style="left:448.0px;top:1042.2px;width:161.0px;height:36.6px;background:#e1e8f0;"></div>
<div class="r" style="left:933.0px;top:1042.2px;width:162.0px;height:36.6px;background:#e1e8f0;"></div>
<div class="r" style="left:772.0px;top:1042.2px;width:161.0px;height:36.6px;background:#cbd2db;"></div>
<div class="r" style="left:44.0px;top:1078.3px;width:1051.0px;height:1.0px;background:#e9e9e9;"></div>
<div class="r" style="left:44.0px;top:1078.8px;width:1051.0px;height:36.6px;background:#ffffff;"></div>
<div class="r" style="left:448.0px;top:1078.8px;width:161.0px;height:36.6px;background:#eaf2fb;"></div>
<div class="r" style="left:933.0px;top:1078.8px;width:162.0px;height:36.6px;background:#eaf2fb;"></div>
<div class="r" style="left:772.0px;top:1078.8px;width:161.0px;height:36.6px;background:#ccd3dc;"></div>
<div class="r" style="left:44.0px;top:1114.9px;width:1051.0px;height:1.0px;background:#e9e9e9;"></div>
<div class="r" style="left:44.0px;top:1115.4px;width:1051.0px;height:36.6px;background:#f3f3f3;"></div>
<div class="r" style="left:448.0px;top:1115.4px;width:161.0px;height:36.6px;background:#e1e8f0;"></div>
<div class="r" style="left:933.0px;top:1115.4px;width:162.0px;height:36.6px;background:#e1e8f0;"></div>
<div class="r" style="left:772.0px;top:1115.4px;width:161.0px;height:36.6px;background:#cbd2db;"></div>
<div class="r" style="left:44.0px;top:1151.4px;width:1051.0px;height:1.0px;background:#e9e9e9;"></div>
<div class="r" style="left:44.0px;top:1151.9px;width:1051.0px;height:36.6px;background:#ffffff;"></div>
<div class="r" style="left:448.0px;top:1151.9px;width:161.0px;height:36.6px;background:#eaf2fb;"></div>
<div class="r" style="left:933.0px;top:1151.9px;width:162.0px;height:36.6px;background:#eaf2fb;"></div>
<div class="r" style="left:772.0px;top:1151.9px;width:161.0px;height:36.6px;background:#ccd3dc;"></div>
<div class="r" style="left:44.0px;top:1188.0px;width:1051.0px;height:1.0px;background:#e9e9e9;"></div>
<div class="r" style="left:44.0px;top:1188.5px;width:1051.0px;height:38.2px;background:#f3f3f3;"></div>
<div class="r" style="left:448.0px;top:1188.5px;width:161.0px;height:38.2px;background:#e1e8f0;"></div>
<div class="r" style="left:933.0px;top:1188.5px;width:162.0px;height:38.2px;background:#e1e8f0;"></div>
<div class="r" style="left:772.0px;top:1188.5px;width:161.0px;height:38.2px;background:#cbd2db;"></div>
<div class="r" style="left:44.0px;top:1226.2px;width:1051.0px;height:1.0px;background:#e9e9e9;"></div>
<div class="r" style="left:44.0px;top:1226.7px;width:1051.0px;height:36.2px;background:#ffffff;"></div>
<div class="r" style="left:448.0px;top:1226.7px;width:161.0px;height:36.2px;background:#eaf2fb;"></div>
<div class="r" style="left:933.0px;top:1226.7px;width:162.0px;height:36.2px;background:#eaf2fb;"></div>
<div class="r" style="left:772.0px;top:1226.7px;width:161.0px;height:36.2px;background:#ccd3dc;"></div>
<div class="r" style="left:44.0px;top:1262.5px;width:1051.0px;height:1.0px;background:#e9e9e9;"></div>
<div class="r" style="left:44.0px;top:1263.0px;width:1051.0px;height:36.2px;background:#f3f3f3;"></div>
<div class="r" style="left:448.0px;top:1263.0px;width:161.0px;height:36.2px;background:#e1e8f0;"></div>
<div class="r" style="left:933.0px;top:1263.0px;width:162.0px;height:36.2px;background:#e1e8f0;"></div>
<div class="r" style="left:772.0px;top:1263.0px;width:161.0px;height:36.2px;background:#cbd2db;"></div>
<div class="r" style="left:44.0px;top:1298.7px;width:1051.0px;height:1.0px;background:#e9e9e9;"></div>
<div class="r" style="left:44.0px;top:1299.2px;width:1051.0px;height:36.2px;background:#ffffff;"></div>
<div class="r" style="left:448.0px;top:1299.2px;width:161.0px;height:36.2px;background:#eaf2fb;"></div>
<div class="r" style="left:933.0px;top:1299.2px;width:162.0px;height:36.2px;background:#eaf2fb;"></div>
<div class="r" style="left:772.0px;top:1299.2px;width:161.0px;height:36.2px;background:#ccd3dc;"></div>
<div class="r" style="left:44.0px;top:1335.0px;width:1051.0px;height:1.0px;background:#e9e9e9;"></div>
<div class="r" style="left:44.0px;top:1335.5px;width:1051.0px;height:36.2px;background:#f3f3f3;"></div>
<div class="r" style="left:448.0px;top:1335.5px;width:161.0px;height:36.2px;background:#e1e8f0;"></div>
<div class="r" style="left:933.0px;top:1335.5px;width:162.0px;height:36.2px;background:#e1e8f0;"></div>
<div class="r" style="left:772.0px;top:1335.5px;width:161.0px;height:36.2px;background:#cbd2db;"></div>
<div class="r" style="left:44.0px;top:1371.2px;width:1051.0px;height:1.0px;background:#e9e9e9;"></div>
<div class="r" style="left:448.0px;top:441.0px;width:161.0px;height:139.5px;background:#deebf7;"></div>
<div class="r" style="left:772.0px;top:441.0px;width:161.0px;height:139.5px;background:#deebf7;"></div>
<div class="r" style="left:933.0px;top:441.0px;width:162.0px;height:139.5px;background:#deebf7;"></div>
<div class="r" style="left:43.0px;top:579.5px;width:1052.0px;height:2.0px;background:#c9c9c9;"></div>
<div class="r" style="left:284.2px;top:391.0px;width:1.6px;height:981.0px;background:#a4a4a4;"></div>
<div class="r" style="left:43.0px;top:1371.0px;width:1052.0px;height:2.0px;background:#c4c4c4;"></div>
<div class="r" style="left:448.0px;top:441.0px;width:161.0px;height:931.5px;border:2px solid #4498e6;box-sizing:border-box;"></div>
<div class="r" style="left:448.0px;top:579.5px;width:161.0px;height:2.0px;background:#4498e6;"></div>
<div class="r" style="left:772.0px;top:441.0px;width:161.0px;height:931.5px;border:2px solid #4498e6;box-sizing:border-box;"></div>
<div class="r" style="left:772.0px;top:579.5px;width:161.0px;height:2.0px;background:#4498e6;"></div>
<div class="r" style="left:933.0px;top:441.0px;width:162.0px;height:931.5px;border:2px solid #4498e6;box-sizing:border-box;"></div>
<div class="r" style="left:933.0px;top:579.5px;width:162.0px;height:2.0px;background:#4498e6;"></div>
<div class="r" style="left:932.0px;top:441.0px;width:2.5px;height:931.5px;background:#2f88e0;"></div>
<div class="t" style="left:548.0px;top:457.7px;font-size:23.26px;color:#323130;transform:scaleX(0.934);">Sales</div>
<div class="t" style="left:512.1px;top:488.7px;font-size:23.55px;color:#323130;transform:scaleX(0.979);">Forecast</div>
<div class="t" style="left:549.2px;top:518.7px;font-size:23.55px;color:#323130;transform:scaleX(1.021);">2026</div>
<div class="t" style="left:510.6px;top:548.7px;font-size:20.35px;color:#323130;transform:scaleX(1.027);">in Millions</div>
<div class="t" style="left:451.8px;top:502.3px;font-size:14.97px;color:#3a6fb5;transform:scaleX(1.088);">1.2</div>
<div class="r" style="left:451.5px;top:516.8px;width:24.0px;height:1.6px;background:#3a6fb5;"></div>
<div class="t" style="left:872.5px;top:457.7px;font-size:23.26px;color:#323130;transform:scaleX(0.934);">Sales</div>
<div class="t" style="left:836.6px;top:488.7px;font-size:23.55px;color:#323130;transform:scaleX(0.979);">Forecast</div>
<div class="t" style="left:873.7px;top:518.7px;font-size:23.55px;color:#323130;transform:scaleX(1.021);">2026</div>
<div class="t" style="left:835.1px;top:548.7px;font-size:20.35px;color:#323130;transform:scaleX(1.027);">in Millions</div>
<div class="t" style="left:776.3px;top:502.3px;font-size:14.97px;color:#3a6fb5;transform:scaleX(1.088);">1.2</div>
<div class="r" style="left:776.0px;top:516.8px;width:24.0px;height:1.6px;background:#3a6fb5;"></div>
<div class="t" style="left:1034.0px;top:457.7px;font-size:23.26px;color:#323130;transform:scaleX(0.934);">Sales</div>
<div class="t" style="left:998.1px;top:488.7px;font-size:23.55px;color:#323130;transform:scaleX(0.979);">Forecast</div>
<div class="t" style="left:1035.2px;top:518.7px;font-size:23.55px;color:#323130;transform:scaleX(1.021);">2026</div>
<div class="t" style="left:996.6px;top:548.7px;font-size:20.35px;color:#323130;transform:scaleX(1.027);">in Millions</div>
<div class="t" style="left:937.8px;top:502.3px;font-size:14.97px;color:#3a6fb5;transform:scaleX(1.088);">1.2</div>
<div class="r" style="left:937.5px;top:516.8px;width:24.0px;height:1.6px;background:#3a6fb5;"></div>
<div class="t" style="left:87.0px;top:599.3px;font-size:23.69px;font-weight:700;color:#222222;transform:scaleX(0.940);">All</div>
<div class="r" style="left:57.2px;top:600.0px;width:16.6px;height:16.6px;border:1.8px solid #4a4a4a;box-sizing:border-box;"></div>
<div class="r" style="left:61.0px;top:607.4px;width:9.0px;height:1.8px;background:#4a4a4a;"></div>
<div class="t" style="left:355.4px;top:599.0px;font-size:25.82px;font-family:'Liberation Mono',monospace;font-weight:700;color:#222222;transform:scaleX(0.869);">609.21</div>
<div class="t" style="left:517.0px;top:599.0px;font-size:25.82px;font-family:'Liberation Mono',monospace;font-weight:700;color:#222222;transform:scaleX(0.871);">143.41</div>
<div class="t" style="left:679.2px;top:599.0px;font-size:25.82px;font-family:'Liberation Mono',monospace;font-weight:700;color:#222222;transform:scaleX(0.869);">609.21</div>
<div class="t" style="left:868.4px;top:599.0px;font-size:25.82px;font-family:'Liberation Mono',monospace;font-weight:700;color:#222222;transform:scaleX(0.865);">0.61</div>
<div class="t" style="left:1003.4px;top:599.0px;font-size:25.82px;font-family:'Liberation Mono',monospace;font-weight:700;color:#222222;transform:scaleX(0.874);">142.80</div>
<div class="t" style="left:86.1px;top:647.2px;font-size:23.69px;font-weight:700;color:#222222;transform:scaleX(0.940);">Furniture</div>
<div class="r" style="left:57.2px;top:647.8px;width:16.6px;height:16.6px;border:1.8px solid #4a4a4a;box-sizing:border-box;"></div>
<div class="r" style="left:61.0px;top:655.2px;width:9.0px;height:1.8px;background:#4a4a4a;"></div>
<div class="t" style="left:355.2px;top:646.9px;font-size:25.82px;font-family:'Liberation Mono',monospace;font-weight:700;color:#222222;transform:scaleX(0.874);">198.90</div>
<div class="t" style="left:531.1px;top:646.9px;font-size:25.82px;font-family:'Liberation Mono',monospace;font-weight:700;color:#222222;transform:scaleX(0.867);">33.80</div>
<div class="t" style="left:679.0px;top:646.9px;font-size:25.82px;font-family:'Liberation Mono',monospace;font-weight:700;color:#222222;transform:scaleX(0.874);">198.90</div>
<div class="t" style="left:868.4px;top:646.9px;font-size:25.82px;font-family:'Liberation Mono',monospace;font-weight:700;color:#222222;transform:scaleX(0.870);">0.20</div>
<div class="t" style="left:1017.5px;top:646.9px;font-size:25.82px;font-family:'Liberation Mono',monospace;font-weight:700;color:#222222;transform:scaleX(0.867);">33.60</div>
<div class="t" style="left:95.7px;top:683.7px;font-size:23.69px;color:#323130;transform:scaleX(0.950);">Bookcases</div>
<div class="t" style="left:368.6px;top:683.8px;font-size:25.37px;font-family:'Liberation Mono',monospace;color:#333333;transform:scaleX(0.894);">26.28</div>
<div class="t" style="left:544.1px;top:683.8px;font-size:25.37px;font-family:'Liberation Mono',monospace;color:#333333;transform:scaleX(0.892);">8.43</div>
<div class="t" style="left:692.4px;top:683.8px;font-size:25.37px;font-family:'Liberation Mono',monospace;color:#333333;transform:scaleX(0.894);">26.28</div>
<div class="t" style="left:868.2px;top:683.8px;font-size:25.37px;font-family:'Liberation Mono',monospace;color:#333333;transform:scaleX(0.890);">0.03</div>
<div class="t" style="left:1030.5px;top:683.8px;font-size:25.37px;font-family:'Liberation Mono',monospace;color:#333333;transform:scaleX(0.891);">8.40</div>
<div class="t" style="left:96.5px;top:719.4px;font-size:23.69px;color:#323130;transform:scaleX(0.950);">Chairs</div>
<div class="t" style="left:368.7px;top:719.4px;font-size:25.37px;font-family:'Liberation Mono',monospace;color:#333333;transform:scaleX(0.894);">83.92</div>
<div class="t" style="left:544.1px;top:719.4px;font-size:25.37px;font-family:'Liberation Mono',monospace;color:#333333;transform:scaleX(0.893);">8.48</div>
<div class="t" style="left:692.5px;top:719.4px;font-size:25.37px;font-family:'Liberation Mono',monospace;color:#333333;transform:scaleX(0.894);">83.92</div>
<div class="t" style="left:868.2px;top:719.4px;font-size:25.37px;font-family:'Liberation Mono',monospace;color:#333333;transform:scaleX(0.891);">0.08</div>
<div class="t" style="left:1030.5px;top:719.4px;font-size:25.37px;font-family:'Liberation Mono',monospace;color:#333333;transform:scaleX(0.891);">8.40</div>
<div class="t" style="left:95.7px;top:755.8px;font-size:23.69px;color:#323130;transform:scaleX(0.950);">Furnishings</div>
<div class="t" style="left:368.6px;top:755.9px;font-size:25.37px;font-family:'Liberation Mono',monospace;color:#333333;transform:scaleX(0.898);">27.87</div>
<div class="t" style="left:544.1px;top:755.9px;font-size:25.37px;font-family:'Liberation Mono',monospace;color:#333333;transform:scaleX(0.892);">8.43</div>
<div class="t" style="left:692.4px;top:755.9px;font-size:25.37px;font-family:'Liberation Mono',monospace;color:#333333;transform:scaleX(0.898);">27.87</div>
<div class="t" style="left:868.2px;top:755.9px;font-size:25.37px;font-family:'Liberation Mono',monospace;color:#333333;transform:scaleX(0.890);">0.03</div>
<div class="t" style="left:1030.5px;top:755.9px;font-size:25.37px;font-family:'Liberation Mono',monospace;color:#333333;transform:scaleX(0.891);">8.40</div>
<div class="t" style="left:97.1px;top:792.7px;font-size:23.69px;color:#323130;transform:scaleX(0.950);">Tables</div>
<div class="t" style="left:368.6px;top:792.8px;font-size:25.37px;font-family:'Liberation Mono',monospace;color:#333333;transform:scaleX(0.894);">60.83</div>
<div class="t" style="left:544.1px;top:792.8px;font-size:25.37px;font-family:'Liberation Mono',monospace;color:#333333;transform:scaleX(0.893);">8.46</div>
<div class="t" style="left:692.4px;top:792.8px;font-size:25.37px;font-family:'Liberation Mono',monospace;color:#333333;transform:scaleX(0.894);">60.83</div>
<div class="t" style="left:868.2px;top:792.8px;font-size:25.37px;font-family:'Liberation Mono',monospace;color:#333333;transform:scaleX(0.891);">0.06</div>
<div class="t" style="left:1030.5px;top:792.8px;font-size:25.37px;font-family:'Liberation Mono',monospace;color:#333333;transform:scaleX(0.891);">8.40</div>
<div class="t" style="left:86.7px;top:831.3px;font-size:23.69px;font-weight:700;color:#222222;transform:scaleX(0.940);">Office Supplies</div>
<div class="r" style="left:57.2px;top:832.0px;width:16.6px;height:16.6px;border:1.8px solid #4a4a4a;box-sizing:border-box;"></div>
<div class="r" style="left:61.0px;top:839.4px;width:9.0px;height:1.8px;background:#4a4a4a;"></div>
<div class="t" style="left:355.2px;top:831.0px;font-size:25.82px;font-family:'Liberation Mono',monospace;font-weight:700;color:#222222;transform:scaleX(0.867);">183.94</div>
<div class="t" style="left:530.7px;top:831.0px;font-size:25.82px;font-family:'Liberation Mono',monospace;font-weight:700;color:#222222;transform:scaleX(0.871);">75.78</div>
<div class="t" style="left:679.0px;top:831.0px;font-size:25.82px;font-family:'Liberation Mono',monospace;font-weight:700;color:#222222;transform:scaleX(0.867);">183.94</div>
<div class="t" style="left:868.4px;top:831.0px;font-size:25.82px;font-family:'Liberation Mono',monospace;font-weight:700;color:#222222;transform:scaleX(0.868);">0.18</div>
<div class="t" style="left:1017.1px;top:831.0px;font-size:25.82px;font-family:'Liberation Mono',monospace;font-weight:700;color:#222222;transform:scaleX(0.873);">75.60</div>
<div class="t" style="left:97.5px;top:868.4px;font-size:23.69px;color:#323130;transform:scaleX(0.950);">Appliances</div>
<div class="t" style="left:368.6px;top:868.5px;font-size:25.37px;font-family:'Liberation Mono',monospace;color:#333333;transform:scaleX(0.893);">26.05</div>
<div class="t" style="left:544.1px;top:868.5px;font-size:25.37px;font-family:'Liberation Mono',monospace;color:#333333;transform:scaleX(0.892);">8.43</div>
<div class="t" style="left:692.4px;top:868.5px;font-size:25.37px;font-family:'Liberation Mono',monospace;color:#333333;transform:scaleX(0.893);">26.05</div>
<div class="t" style="left:868.2px;top:868.5px;font-size:25.37px;font-family:'Liberation Mono',monospace;color:#333333;transform:scaleX(0.890);">0.03</div>
<div class="t" style="left:1030.5px;top:868.5px;font-size:25.37px;font-family:'Liberation Mono',monospace;color:#333333;transform:scaleX(0.891);">8.40</div>
<div class="t" style="left:97.5px;top:904.4px;font-size:23.69px;color:#323130;transform:scaleX(0.950);">Art</div>
<div class="t" style="left:382.3px;top:904.4px;font-size:25.37px;font-family:'Liberation Mono',monospace;color:#333333;transform:scaleX(0.892);">5.96</div>
<div class="t" style="left:544.1px;top:904.4px;font-size:25.37px;font-family:'Liberation Mono',monospace;color:#333333;transform:scaleX(0.886);">8.41</div>
<div class="t" style="left:706.1px;top:904.4px;font-size:25.37px;font-family:'Liberation Mono',monospace;color:#333333;transform:scaleX(0.892);">5.96</div>
<div class="t" style="left:868.2px;top:904.4px;font-size:25.37px;font-family:'Liberation Mono',monospace;color:#333333;transform:scaleX(0.885);">0.01</div>
<div class="t" style="left:1030.5px;top:904.4px;font-size:25.37px;font-family:'Liberation Mono',monospace;color:#333333;transform:scaleX(0.891);">8.40</div>
<div class="t" style="left:95.7px;top:940.6px;font-size:23.69px;color:#323130;transform:scaleX(0.950);">Binders</div>
<div class="t" style="left:369.1px;top:940.7px;font-size:25.37px;font-family:'Liberation Mono',monospace;color:#333333;transform:scaleX(0.888);">49.68</div>
<div class="t" style="left:544.1px;top:940.7px;font-size:25.37px;font-family:'Liberation Mono',monospace;color:#333333;transform:scaleX(0.892);">8.45</div>
<div class="t" style="left:692.9px;top:940.7px;font-size:25.37px;font-family:'Liberation Mono',monospace;color:#333333;transform:scaleX(0.888);">49.68</div>
<div class="t" style="left:868.2px;top:940.7px;font-size:25.37px;font-family:'Liberation Mono',monospace;color:#333333;transform:scaleX(0.890);">0.05</div>
<div class="t" style="left:1030.5px;top:940.7px;font-size:25.37px;font-family:'Liberation Mono',monospace;color:#333333;transform:scaleX(0.891);">8.40</div>
<div class="t" style="left:95.7px;top:977.2px;font-size:23.69px;color:#323130;transform:scaleX(0.950);">Envelopes</div>
<div class="t" style="left:382.6px;top:977.3px;font-size:25.37px;font-family:'Liberation Mono',monospace;color:#333333;transform:scaleX(0.886);">4.73</div>
<div class="t" style="left:544.1px;top:977.3px;font-size:25.37px;font-family:'Liberation Mono',monospace;color:#333333;transform:scaleX(0.891);">8.40</div>
<div class="t" style="left:706.4px;top:977.3px;font-size:25.37px;font-family:'Liberation Mono',monospace;color:#333333;transform:scaleX(0.886);">4.73</div>
<div class="t" style="left:868.2px;top:977.3px;font-size:25.37px;font-family:'Liberation Mono',monospace;color:#333333;transform:scaleX(0.889);">0.00</div>
<div class="t" style="left:1030.5px;top:977.3px;font-size:25.37px;font-family:'Liberation Mono',monospace;color:#333333;transform:scaleX(0.891);">8.40</div>
<div class="t" style="left:95.7px;top:1013.8px;font-size:23.69px;color:#323130;transform:scaleX(0.950);">Fasteners</div>
<div class="t" style="left:382.4px;top:1013.8px;font-size:25.37px;font-family:'Liberation Mono',monospace;color:#333333;transform:scaleX(0.891);">0.96</div>
<div class="t" style="left:544.1px;top:1013.8px;font-size:25.37px;font-family:'Liberation Mono',monospace;color:#333333;transform:scaleX(0.891);">8.40</div>
<div class="t" style="left:706.2px;top:1013.8px;font-size:25.37px;font-family:'Liberation Mono',monospace;color:#333333;transform:scaleX(0.891);">0.96</div>
<div class="t" style="left:868.2px;top:1013.8px;font-size:25.37px;font-family:'Liberation Mono',monospace;color:#333333;transform:scaleX(0.889);">0.00</div>
<div class="t" style="left:1030.5px;top:1013.8px;font-size:25.37px;font-family:'Liberation Mono',monospace;color:#333333;transform:scaleX(0.891);">8.40</div>
<div class="t" style="left:95.7px;top:1050.4px;font-size:23.69px;color:#323130;transform:scaleX(0.950);">Labels</div>
<div class="t" style="left:382.2px;top:1050.4px;font-size:25.37px;font-family:'Liberation Mono',monospace;color:#333333;transform:scaleX(0.894);">2.83</div>
<div class="t" style="left:544.1px;top:1050.4px;font-size:25.37px;font-family:'Liberation Mono',monospace;color:#333333;transform:scaleX(0.891);">8.40</div>
<div class="t" style="left:706.0px;top:1050.4px;font-size:25.37px;font-family:'Liberation Mono',monospace;color:#333333;transform:scaleX(0.894);">2.83</div>
<div class="t" style="left:868.2px;top:1050.4px;font-size:25.37px;font-family:'Liberation Mono',monospace;color:#333333;transform:scaleX(0.889);">0.00</div>
<div class="t" style="left:1030.5px;top:1050.4px;font-size:25.37px;font-family:'Liberation Mono',monospace;color:#333333;transform:scaleX(0.891);">8.40</div>
<div class="t" style="left:95.7px;top:1086.9px;font-size:23.69px;color:#323130;transform:scaleX(0.950);">Paper</div>
<div class="t" style="left:368.6px;top:1087.0px;font-size:25.37px;font-family:'Liberation Mono',monospace;color:#333333;transform:scaleX(0.894);">20.66</div>
<div class="t" style="left:544.1px;top:1087.0px;font-size:25.37px;font-family:'Liberation Mono',monospace;color:#333333;transform:scaleX(0.895);">8.42</div>
<div class="t" style="left:692.4px;top:1087.0px;font-size:25.37px;font-family:'Liberation Mono',monospace;color:#333333;transform:scaleX(0.894);">20.66</div>
<div class="t" style="left:868.2px;top:1087.0px;font-size:25.37px;font-family:'Liberation Mono',monospace;color:#333333;transform:scaleX(0.893);">0.02</div>
<div class="t" style="left:1030.5px;top:1087.0px;font-size:25.37px;font-family:'Liberation Mono',monospace;color:#333333;transform:scaleX(0.891);">8.40</div>
<div class="t" style="left:96.6px;top:1123.5px;font-size:23.69px;color:#323130;transform:scaleX(0.950);">Storage</div>
<div class="t" style="left:368.8px;top:1123.6px;font-size:25.37px;font-family:'Liberation Mono',monospace;color:#333333;transform:scaleX(0.893);">58.79</div>
<div class="t" style="left:544.1px;top:1123.6px;font-size:25.37px;font-family:'Liberation Mono',monospace;color:#333333;transform:scaleX(0.893);">8.46</div>
<div class="t" style="left:692.6px;top:1123.6px;font-size:25.37px;font-family:'Liberation Mono',monospace;color:#333333;transform:scaleX(0.893);">58.79</div>
<div class="t" style="left:868.2px;top:1123.6px;font-size:25.37px;font-family:'Liberation Mono',monospace;color:#333333;transform:scaleX(0.891);">0.06</div>
<div class="t" style="left:1030.5px;top:1123.6px;font-size:25.37px;font-family:'Liberation Mono',monospace;color:#333333;transform:scaleX(0.891);">8.40</div>
<div class="t" style="left:96.6px;top:1160.1px;font-size:23.69px;color:#323130;transform:scaleX(0.950);">Supplies</div>
<div class="t" style="left:368.6px;top:1160.1px;font-size:25.37px;font-family:'Liberation Mono',monospace;color:#333333;transform:scaleX(0.895);">14.28</div>
<div class="t" style="left:544.1px;top:1160.1px;font-size:25.37px;font-family:'Liberation Mono',monospace;color:#333333;transform:scaleX(0.886);">8.41</div>
<div class="t" style="left:692.4px;top:1160.1px;font-size:25.37px;font-family:'Liberation Mono',monospace;color:#333333;transform:scaleX(0.895);">14.28</div>
<div class="t" style="left:868.2px;top:1160.1px;font-size:25.37px;font-family:'Liberation Mono',monospace;color:#333333;transform:scaleX(0.885);">0.01</div>
<div class="t" style="left:1030.5px;top:1160.1px;font-size:25.37px;font-family:'Liberation Mono',monospace;color:#333333;transform:scaleX(0.891);">8.40</div>
<div class="t" style="left:87.4px;top:1198.0px;font-size:23.69px;font-weight:700;color:#222222;transform:scaleX(0.940);">Technology</div>
<div class="r" style="left:57.2px;top:1198.6px;width:16.6px;height:16.6px;border:1.8px solid #4a4a4a;box-sizing:border-box;"></div>
<div class="r" style="left:61.0px;top:1206.0px;width:9.0px;height:1.8px;background:#4a4a4a;"></div>
<div class="t" style="left:355.4px;top:1197.7px;font-size:25.82px;font-family:'Liberation Mono',monospace;font-weight:700;color:#222222;transform:scaleX(0.872);">226.36</div>
<div class="t" style="left:531.1px;top:1197.7px;font-size:25.82px;font-family:'Liberation Mono',monospace;font-weight:700;color:#222222;transform:scaleX(0.865);">33.83</div>
<div class="t" style="left:679.2px;top:1197.7px;font-size:25.82px;font-family:'Liberation Mono',monospace;font-weight:700;color:#222222;transform:scaleX(0.872);">226.36</div>
<div class="t" style="left:868.4px;top:1197.7px;font-size:25.82px;font-family:'Liberation Mono',monospace;font-weight:700;color:#222222;transform:scaleX(0.867);">0.23</div>
<div class="t" style="left:1017.5px;top:1197.7px;font-size:25.82px;font-family:'Liberation Mono',monospace;font-weight:700;color:#222222;transform:scaleX(0.867);">33.60</div>
<div class="t" style="left:97.5px;top:1234.7px;font-size:23.69px;color:#323130;transform:scaleX(0.950);">Accessories</div>
<div class="t" style="left:369.1px;top:1234.7px;font-size:25.37px;font-family:'Liberation Mono',monospace;color:#333333;transform:scaleX(0.886);">41.90</div>
<div class="t" style="left:544.1px;top:1234.7px;font-size:25.37px;font-family:'Liberation Mono',monospace;color:#333333;transform:scaleX(0.887);">8.44</div>
<div class="t" style="left:692.9px;top:1234.7px;font-size:25.37px;font-family:'Liberation Mono',monospace;color:#333333;transform:scaleX(0.886);">41.90</div>
<div class="t" style="left:868.2px;top:1234.7px;font-size:25.37px;font-family:'Liberation Mono',monospace;color:#333333;transform:scaleX(0.885);">0.04</div>
<div class="t" style="left:1030.5px;top:1234.7px;font-size:25.37px;font-family:'Liberation Mono',monospace;color:#333333;transform:scaleX(0.891);">8.40</div>
<div class="t" style="left:96.5px;top:1270.9px;font-size:23.69px;color:#323130;transform:scaleX(0.950);">Copiers</div>
<div class="t" style="left:369.1px;top:1271.0px;font-size:25.37px;font-family:'Liberation Mono',monospace;color:#333333;transform:scaleX(0.886);">49.60</div>
<div class="t" style="left:544.1px;top:1271.0px;font-size:25.37px;font-family:'Liberation Mono',monospace;color:#333333;transform:scaleX(0.892);">8.45</div>
<div class="t" style="left:692.9px;top:1271.0px;font-size:25.37px;font-family:'Liberation Mono',monospace;color:#333333;transform:scaleX(0.886);">49.60</div>
<div class="t" style="left:868.2px;top:1271.0px;font-size:25.37px;font-family:'Liberation Mono',monospace;color:#333333;transform:scaleX(0.890);">0.05</div>
<div class="t" style="left:1030.5px;top:1271.0px;font-size:25.37px;font-family:'Liberation Mono',monospace;color:#333333;transform:scaleX(0.891);">8.40</div>
<div class="t" style="left:95.7px;top:1307.2px;font-size:23.69px;color:#323130;transform:scaleX(0.950);">Machines</div>
<div class="t" style="left:368.8px;top:1307.2px;font-size:25.37px;font-family:'Liberation Mono',monospace;color:#333333;transform:scaleX(0.886);">55.91</div>
<div class="t" style="left:544.1px;top:1307.2px;font-size:25.37px;font-family:'Liberation Mono',monospace;color:#333333;transform:scaleX(0.893);">8.46</div>
<div class="t" style="left:692.6px;top:1307.2px;font-size:25.37px;font-family:'Liberation Mono',monospace;color:#333333;transform:scaleX(0.886);">55.91</div>
<div class="t" style="left:868.2px;top:1307.2px;font-size:25.37px;font-family:'Liberation Mono',monospace;color:#333333;transform:scaleX(0.891);">0.06</div>
<div class="t" style="left:1030.5px;top:1307.2px;font-size:25.37px;font-family:'Liberation Mono',monospace;color:#333333;transform:scaleX(0.891);">8.40</div>
<div class="t" style="left:95.7px;top:1343.4px;font-size:23.69px;color:#323130;transform:scaleX(0.950);">Phones</div>
<div class="t" style="left:368.4px;top:1343.5px;font-size:25.37px;font-family:'Liberation Mono',monospace;color:#333333;transform:scaleX(0.897);">78.96</div>
<div class="t" style="left:544.1px;top:1343.5px;font-size:25.37px;font-family:'Liberation Mono',monospace;color:#333333;transform:scaleX(0.893);">8.48</div>
<div class="t" style="left:692.2px;top:1343.5px;font-size:25.37px;font-family:'Liberation Mono',monospace;color:#333333;transform:scaleX(0.897);">78.96</div>
<div class="t" style="left:868.2px;top:1343.5px;font-size:25.37px;font-family:'Liberation Mono',monospace;color:#333333;transform:scaleX(0.891);">0.08</div>
<div class="t" style="left:1030.5px;top:1343.5px;font-size:25.37px;font-family:'Liberation Mono',monospace;color:#333333;transform:scaleX(0.891);">8.40</div>
<div class="t" style="left:59.2px;top:270.3px;font-size:29.07px;font-weight:700;color:#7b50cc;transform:scaleX(0.869);">To Create Forecast Measure :</div>
<div class="t" style="left:58.5px;top:336.5px;font-size:29.07px;font-weight:700;color:#7b50cc;transform:scaleX(0.869);">Click on Toolbar - - &gt; Insert Tab - - &gt; Forecast Measure</div>
<div class="r" style="left:732.3px;top:268.2px;width:1210.0px;height:114.8px;background:#f4f4f4;"></div>
<div class="t" style="left:741.0px;top:280.6px;font-size:14.53px;color:#323130;transform:scaleX(1.061);">Home</div>
<div class="t" style="left:800.4px;top:280.6px;font-size:14.53px;color:#323130;transform:scaleX(1.075);">Insert</div>
<div class="t" style="left:858.6px;top:280.6px;font-size:14.53px;color:#323130;transform:scaleX(1.018);">Design</div>
<div class="t" style="left:922.9px;top:280.6px;font-size:14.53px;color:#323130;transform:scaleX(1.081);">Export</div>
<div class="t" style="left:986.8px;top:280.6px;font-size:14.53px;color:#323130;transform:scaleX(1.009);">Forecast</div>
<div class="t" style="left:1062.9px;top:280.6px;font-size:14.53px;color:#323130;transform:scaleX(1.086);">Infobridge</div>
<div class="r" style="left:801.0px;top:299.0px;width:39.0px;height:2.3px;background:#0078d4;"></div>
<div class="t" style="left:741.5px;top:331.4px;font-size:10.47px;color:#a8a6a4;transform:scaleX(1.111);">Insert</div>
<div class="t" style="left:740.5px;top:348.4px;font-size:10.47px;color:#a8a6a4;transform:scaleX(1.025);">Row</div>
<div class="t" style="left:777.6px;top:331.4px;font-size:10.47px;color:#a8a6a4;transform:scaleX(1.127);">Invert</div>
<div class="t" style="left:814.8px;top:331.4px;font-size:10.47px;color:#3b3a39;transform:scaleX(1.102);">Pivot</div>
<div class="t" style="left:848.1px;top:331.4px;font-size:10.47px;color:#3b3a39;transform:scaleX(1.082);">Manage</div>
<div class="t" style="left:853.9px;top:348.4px;font-size:10.47px;color:#3b3a39;transform:scaleX(1.047);">Rows</div>
<div class="t" style="left:920.2px;top:331.4px;font-size:10.47px;color:#3b3a39;transform:scaleX(1.071);">Quick</div>
<div class="t" style="left:908.7px;top:348.4px;font-size:10.47px;color:#3b3a39;transform:scaleX(1.076);">Formula</div>
<div class="t" style="left:972.9px;top:331.4px;font-size:10.47px;color:#3b3a39;transform:scaleX(1.115);">Insert</div>
<div class="t" style="left:965.5px;top:348.4px;font-size:10.47px;color:#3b3a39;transform:scaleX(1.092);">Formula</div>
<div class="t" style="left:1017.0px;top:331.4px;font-size:10.47px;color:#3b3a39;transform:scaleX(1.109);">Blend</div>
<div class="t" style="left:1060.5px;top:331.4px;font-size:10.47px;color:#3b3a39;transform:scaleX(1.099);">Simulate</div>
<div class="t" style="left:1111.9px;top:331.4px;font-size:10.47px;color:#a8a6a4;transform:scaleX(1.155);">Invert</div>
<div class="t" style="left:1156.1px;top:331.4px;font-size:10.47px;color:#3b3a39;transform:scaleX(1.083);">Data</div>
<div class="t" style="left:1148.8px;top:348.4px;font-size:10.47px;color:#3b3a39;transform:scaleX(1.250);">Input</div>
<div class="t" style="left:1204.7px;top:331.4px;font-size:10.47px;color:#3b3a39;transform:scaleX(1.096);">Manage</div>
<div class="t" style="left:1200.1px;top:348.4px;font-size:10.47px;color:#3b3a39;transform:scaleX(1.051);">Measures</div>
<div class="t" style="left:1264.9px;top:331.4px;font-size:10.47px;color:#3b3a39;transform:scaleX(1.060);">Variables</div>
<div class="t" style="left:1329.1px;top:331.4px;font-size:10.47px;color:#3b3a39;transform:scaleX(1.061);">Forecast</div>
<div class="t" style="left:1328.1px;top:348.4px;font-size:10.47px;color:#3b3a39;transform:scaleX(1.076);">Measure</div>
<div class="t" style="left:1393.3px;top:331.4px;font-size:10.47px;color:#3b3a39;transform:scaleX(1.098);">Create</div>
<div class="t" style="left:1387.5px;top:348.4px;font-size:10.47px;color:#3b3a39;transform:scaleX(1.072);">Scenario</div>
<div class="t" style="left:1448.7px;top:331.4px;font-size:10.47px;color:#a8a6a4;transform:scaleX(1.065);">Edit</div>
<div class="t" style="left:1447.4px;top:348.4px;font-size:10.47px;color:#a8a6a4;transform:scaleX(1.179);">Cell</div>
<div class="t" style="left:1477.8px;top:331.4px;font-size:10.47px;color:#3b3a39;transform:scaleX(1.126);">Goal</div>
<div class="t" style="left:1477.2px;top:348.4px;font-size:10.47px;color:#3b3a39;transform:scaleX(0.988);">Seek</div>
<div class="t" style="left:1510.5px;top:331.4px;font-size:10.47px;color:#3b3a39;transform:scaleX(1.098);">Bulk</div>
<div class="t" style="left:1510.4px;top:348.4px;font-size:10.47px;color:#3b3a39;transform:scaleX(1.106);">Edit</div>
<div class="t" style="left:1550.3px;top:331.4px;font-size:10.47px;color:#a8a6a4;transform:scaleX(1.067);">Smart</div>
<div class="t" style="left:1541.0px;top:348.4px;font-size:10.47px;color:#a8a6a4;transform:scaleX(1.063);">Analysis</div>
<div class="t" style="left:1606.0px;top:331.4px;font-size:10.47px;color:#a8a6a4;transform:scaleX(1.109);">Group</div>
<div class="t" style="left:1645.5px;top:331.4px;font-size:10.47px;color:#3b3a39;transform:scaleX(1.085);">Aggregation</div>
<div class="t" style="left:1732.2px;top:331.4px;font-size:10.47px;color:#3b3a39;transform:scaleX(1.023);">Set</div>
<div class="t" style="left:1721.4px;top:348.4px;font-size:10.47px;color:#3b3a39;transform:scaleX(1.047);">Version</div>
<div class="t" style="left:1783.0px;top:331.4px;font-size:10.47px;color:#3b3a39;transform:scaleX(1.142);">Filter</div>
<div class="t" style="left:1775.4px;top:348.4px;font-size:10.47px;color:#3b3a39;transform:scaleX(1.120);">Context</div>
<div class="t" style="left:1832.6px;top:331.4px;font-size:10.47px;color:#3b3a39;transform:scaleX(1.094);">Audit</div>
<div class="t" style="left:807.2px;top:367.1px;font-size:10.47px;color:#5f5e5c;transform:scaleX(0.970);">Row</div>
<div class="t" style="left:1061.5px;top:367.1px;font-size:10.47px;color:#5f5e5c;transform:scaleX(1.018);">Column</div>
<div class="t" style="left:1273.8px;top:367.1px;font-size:10.47px;color:#5f5e5c;transform:scaleX(1.055);">Global</div>
<div class="t" style="left:1330.9px;top:367.1px;font-size:10.47px;color:#5f5e5c;transform:scaleX(0.973);">Forecast</div>
<div class="t" style="left:1390.3px;top:367.1px;font-size:10.47px;color:#5f5e5c;transform:scaleX(0.970);">Scenario</div>
<div class="t" style="left:1509.7px;top:367.1px;font-size:10.47px;color:#5f5e5c;transform:scaleX(1.054);">Cell</div>
<div class="t" style="left:1631.7px;top:367.1px;font-size:10.47px;color:#5f5e5c;transform:scaleX(0.987);">Customize</div>
<div class="t" style="left:1719.5px;top:367.1px;font-size:10.47px;color:#5f5e5c;transform:scaleX(0.994);">Compare</div>
<div class="t" style="left:1776.7px;top:367.1px;font-size:10.47px;color:#5f5e5c;transform:scaleX(0.970);">Measure</div>
<div class="t" style="left:1834.0px;top:367.1px;font-size:10.47px;color:#5f5e5c;transform:scaleX(0.977);">Audit</div>
<div class="r" style="left:901.1px;top:306.9px;width:1.2px;height:73.1px;background:#c8c6c4;"></div>
<div class="r" style="left:1256.4px;top:306.9px;width:1.2px;height:73.1px;background:#c8c6c4;"></div>
<div class="r" style="left:1439.8px;top:306.9px;width:1.2px;height:73.1px;background:#c8c6c4;"></div>
<div class="r" style="left:1596.9px;top:306.9px;width:1.2px;height:73.1px;background:#c8c6c4;"></div>
<div class="r" style="left:1712.9px;top:306.9px;width:1.2px;height:73.1px;background:#c8c6c4;"></div>
<div class="r" style="left:1767.7px;top:306.9px;width:1.2px;height:73.1px;background:#c8c6c4;"></div>
<div class="r" style="left:1824.2px;top:306.9px;width:1.2px;height:73.1px;background:#c8c6c4;"></div>
<div class="r" style="left:1865.7px;top:306.9px;width:1.2px;height:73.1px;background:#c8c6c4;"></div>
<div class="r" style="left:1053.2px;top:306.9px;width:1.2px;height:56.9px;background:#c8c6c4;"></div>
<div class="r" style="left:1192.9px;top:306.9px;width:1.2px;height:56.9px;background:#c8c6c4;"></div>
<div class="r" style="left:1379.5px;top:312.0px;width:1.5px;height:68.0px;background:#c8c6c4;"></div>
<div class="r" style="left:1270.0px;top:273.4px;width:134.8px;height:26.0px;background:#f3f3f3;border:1px solid #dedede;box-sizing:border-box;"></div>
<div class="t" style="left:1299.1px;top:280.6px;font-size:11.92px;color:#3b3a39;transform:scaleX(0.949);">Manage Columns</div>
<div class="r" style="left:1592.5px;top:271.0px;width:105.5px;height:27.0px;background:#ffffff;border:1px solid #e8e8e8;box-sizing:border-box;"></div>
<div class="r" style="left:1621.5px;top:271.0px;width:1.0px;height:27.0px;background:#e8e8e8;"></div>
<div class="t" style="left:1628.8px;top:279.7px;font-size:11.92px;color:#3b3a39;transform:scaleX(0.964);">Comments</div>
<div class="r" style="left:1725.7px;top:269.8px;width:52.7px;height:30.2px;background:#ffffff;border:1px solid #e8e8e8;box-sizing:border-box;"></div>
<div class="r" style="left:1318.8px;top:299.7px;width:67.1px;height:86.9px;border:4px solid #7b50cc;box-sizing:border-box;"></div>
<svg class="r" style="left:0;top:0" width="1960" height="400" viewBox="0 0 1960 400" fill="none"><polyline points="1766,282.5 1769.25,286.5 1772.5,282.5" stroke="#333" stroke-width="1.4" fill="none"/><g transform="translate(1743.3,284.6) scale(0.492) translate(-1540,-42.7)"><clipPath id="avc2"><circle cx="1540" cy="42.7" r="24.4"/></clipPath><g clip-path="url(#avc2)"><rect x="1515" y="18" width="50" height="50" fill="#52ecf8"/><path d="M1510 70 Q1512 53 1528 50 L1552 50 Q1568 53 1570 70 Z" fill="#dcae80"/><path d="M1510 70 Q1512 53 1526 50 L1530 52 Q1526 60 1527 70Z" fill="#a87452"/><path d="M1570 70 Q1568 53 1554 50 L1550 52 Q1554 60 1553 70Z" fill="#a87452"/><path d="M1527 36 Q1525 17 1541 17 Q1557 17 1555.6 36 Q1553 24 1541 23.5 Q1529 24 1527 36Z" fill="#0a0808"/><ellipse cx="1541" cy="37" rx="12" ry="15" fill="#d6a47a"/><path d="M1529 30 Q1530 20 1541 21 Q1552 20 1553 30 Q1549 24 1541 24 Q1533 24 1529 30Z" fill="#0a0808"/><ellipse cx="1541" cy="33" rx="4" ry="6" fill="#e8c4a0"/><path d="M1536 45 h9" stroke="#b8705a" stroke-width="1.3"/><path d="M1533 35 h4 M1545 35 h4" stroke="#7a6050" stroke-width="1.4"/></g></g><polyline points="1392,284 1395.25,288 1398.5,284" stroke="#333" stroke-width="1.4" fill="none"/><polyline points="1685.5,284 1689.0,288 1692.5,284" stroke="#333" stroke-width="1.4" fill="none"/><path d="M1285 277 H1277 V295 H1283" stroke="#333" stroke-width="1.3"/><path d="M1277 277 H1293 V283" stroke="#333" stroke-width="1.3"/><line x1="1284" y1="277" x2="1284" y2="285" stroke="#333" stroke-width="1.3"/><path d="M1286 293 L1292 286 a1.5 1.5 0 0 1 2.2 2 L1288 295 L1285.5 295.5Z" stroke="#1e62b8" stroke-width="1.4"/><path d="M1604 277 H1615 V290 H1602 L1600 294 L1598 290 H1597 V284" stroke="#888" stroke-width="1.2"/><line x1="1596" y1="280" x2="1603" y2="280" stroke="#6a9fd8" stroke-width="1.2"/><line x1="1599.5" y1="276.5" x2="1599.5" y2="284" stroke="#6a9fd8" stroke-width="1.2"/><rect x="748" y="309" width="17" height="17" stroke="#a0a0a0" stroke-width="1.2"/><rect x="748" y="314" width="17" height="6" fill="#a9cdf0"/><line x1="786" y1="326" x2="800" y2="312" stroke="#a0a0a0" stroke-width="1.2"/><path d="M785 313 h6 M788 310 v6 M794 322 h6" stroke="#8fb8e6" stroke-width="1.2"/><rect x="820" y="309" width="16" height="16" stroke="#555" stroke-width="1.3"/><rect x="820" y="313" width="16" height="5" fill="#5a9ee0" stroke="#2a6fc2" stroke-width="1"/><rect x="860" y="312" width="15" height="14" stroke="#555" stroke-width="1.3" fill="#f3f3f3"/><path d="M863 312 v-3 h15 v13 h-3" stroke="#555" stroke-width="1.1"/><rect x="860" y="315.5" width="15" height="5" fill="#5a9ee0" stroke="#2a6fc2" stroke-width="1"/><path d="M937 309 L929 320 H934 L930 327 L941 314 H936 Z" fill="#3a86da" stroke="#2a6fc2" stroke-width="0.8"/><rect x="979" y="309" width="18" height="15" stroke="#555" stroke-width="1.2"/><rect x="983" y="313" width="9" height="13" fill="#f3f3f3" stroke="#555" stroke-width="1.1"/><rect x="984.5" y="314.5" width="6" height="3" fill="#3a86da"/><line x1="1031" y1="308" x2="1031" y2="327" stroke="#555" stroke-width="1.1" stroke-dasharray="2 1.5"/><path d="M1023 318 h6 M1026 315 l3 3 -3 3 M1040 318 h-6 M1037 315 l-3 3 3 3" stroke="#2a6fc2" stroke-width="1.2"/><path d="M1074 310 h17 M1074 326 h17" stroke="#555" stroke-width="1.5"/><path d="M1074 318 h17" stroke="#2a6fc2" stroke-width="1.3"/><circle cx="1083" cy="318" r="2.5" fill="#5a9ee0" stroke="#2a6fc2"/><line x1="1120" y1="326" x2="1134" y2="312" stroke="#a0a0a0" stroke-width="1.2"/><path d="M1119 313 h6 M1122 310 v6 M1128 322 h6" stroke="#8fb8e6" stroke-width="1.2"/><rect x="1159" y="309" width="18" height="13" stroke="#555" stroke-width="1.3"/><path d="M1167 316 v11 M1165 316 h4 M1165 327 h4" stroke="#2a6fc2" stroke-width="1.3"/><path d="M1217 324 V309 H1230" stroke="#555" stroke-width="1.2"/><rect x="1220" y="313" width="14" height="13" stroke="#555" stroke-width="1.2" fill="#f3f3f3"/><rect x="1224" y="313" width="5" height="13" fill="#5a9ee0" stroke="#2a6fc2"/><circle cx="1236" cy="314" r="5.5" fill="#3f78c8"/><text x="1236" y="317.5" font-family="Liberation Sans" font-weight="700" font-size="8" fill="#fff" text-anchor="middle">1</text><path d="M1282 309 h-2 v15 h2 M1290 309 h2 v12" stroke="#555" stroke-width="1.2"/><path d="M1283 313 l6 8 M1289 313 l-6 8" stroke="#555" stroke-width="1.2"/><path d="M1290 322 h6 M1293 319 v6" stroke="#2a6fc2" stroke-width="1.3"/><polyline points="1285,351.5 1288.5,355.5 1292,351.5" stroke="#333" stroke-width="1.3" fill="none"/><path d="M1343 309 v16 h8" stroke="#555" stroke-width="1.2"/><path d="M1343 317 l4 -4 4 3 5 -4" stroke="#555" stroke-width="1.2"/><rect x="1350" y="316" width="10" height="10" stroke="#555" stroke-width="1.1"/><rect x="1353" y="316" width="4" height="10" fill="#5a9ee0" stroke="#2a6fc2" stroke-width="0.8"/><path d="M1402 326 V314 M1405 326 V311 M1408 326 V309 M1411 326 V312 M1414 326 V315" stroke="#555" stroke-width="1.6"/><path d="M1401 323 h17" stroke="#2a6fc2" stroke-width="1.2"/><circle cx="1409" cy="323" r="2" fill="#5a9ee0" stroke="#2a6fc2"/><rect x="1450" y="309" width="17" height="17" stroke="#a0a0a0" stroke-width="1.2"/><rect x="1455" y="309" width="12" height="9" fill="#a9cdf0"/><circle cx="1489.5" cy="317.5" r="6" stroke="#555" stroke-width="1.2"/><circle cx="1489.5" cy="317.5" r="2" fill="#2a6fc2"/><path d="M1489.5 309 v3 M1489.5 323 v3 M1481 317.5 h3 M1495 317.5 h3" stroke="#555" stroke-width="1.2"/><path d="M1514 311 l12 14 M1528 311 l-12 14" stroke="#2a6fc2" stroke-width="2"/><path d="M1514 311 l12 14" stroke="#555" stroke-width="1.2"/><path d="M1558 309 h7 l4 4 v13 h-11 z" stroke="#a0a0a0" stroke-width="1.1"/><circle cx="1568" cy="319" r="3" stroke="#8fb8e6" stroke-width="1.2"/><rect x="1614" y="310" width="10" height="10" fill="#a9cdf0" stroke="#8fb8e6"/><rect x="1617" y="313" width="11" height="11" stroke="#a0a0a0" stroke-width="1.1"/><polyline points="1618,351.5 1621.25,355.5 1624.5,351.5" stroke="#a0a0a0" stroke-width="1.3" fill="none"/><path d="M1680 313 h-8 l5 6 -5 6 h8" stroke="#555" stroke-width="1.3"/><circle cx="1677" cy="310" r="2" stroke="#2a6fc2" stroke-width="1.3"/><path d="M1736 311 v12 a5 2.5 0 0 0 8 1" stroke="#555" stroke-width="1.3"/><ellipse cx="1740.5" cy="311" rx="4.5" ry="2" stroke="#555" stroke-width="1.3"/><circle cx="1746" cy="321" r="3.3" stroke="#2a6fc2" stroke-width="1.8"/><path d="M1789 310 h17 l-6.5 8 v7 l-4 -2 v-5 z" stroke="#555" stroke-width="1.3"/><rect x="1838" y="310" width="12" height="15" stroke="#555" stroke-width="1.3"/><rect x="1841" y="313" width="3" height="3" fill="#2a6fc2"/><rect x="1841" y="318" width="3" height="3" fill="#2a6fc2"/><circle cx="1850" cy="321" r="2.5" stroke="#2a6fc2" stroke-width="1.2"/><path d="M1852 323 l3 3" stroke="#2a6fc2" stroke-width="1.2"/><polyline points="764,352 766.75,355.5 769.5,352" stroke="#a0a0a0" stroke-width="1.1" fill="none"/><polyline points="953,352 956.0,355.5 959,352" stroke="#333" stroke-width="1.1" fill="none"/><polyline points="1180,352 1183.0,355.5 1186,352" stroke="#333" stroke-width="1.1" fill="none"/><polyline points="1584,352 1587.0,355.5 1590,352" stroke="#a0a0a0" stroke-width="1.1" fill="none"/><polyline points="1930,379.5 1934.0,384 1938,379.5" stroke="#333" stroke-width="1.3" fill="none"/></svg>
<div class="r" style="left:613.5px;top:670.4px;width:1114.2px;height:608.0px;background:#ffffff;border-radius:3px;box-shadow:0 0 4px rgba(0,0,0,0.08),0 0 16px 3px rgba(0,0,0,0.13);"></div>
<div class="t" style="left:644.9px;top:708.2px;font-size:45.06px;color:#323130;transform:scaleX(0.903);">Reconfigure Period Values</div>
<div class="t" style="left:646.0px;top:825.1px;font-size:24.13px;color:#484644;transform:scaleX(0.966);">Closed Period</div>
<div class="t" style="left:1081.3px;top:825.5px;font-size:24.13px;color:#484644;transform:scaleX(0.982);">Open Period</div>
<div class="t" style="left:645.1px;top:955.5px;font-size:24.13px;color:#484644;transform:scaleX(0.966);">Linked Measure</div>
<div class="t" style="left:1080.4px;top:956.2px;font-size:24.13px;color:#484644;transform:scaleX(1.005);">Default Value</div>
<div class="t" style="left:1081.6px;top:1068.5px;font-size:24.13px;color:#484644;transform:scaleX(0.958);">Set Value</div>
<div class="r" style="left:646.0px;top:872.0px;width:387.3px;height:60.0px;background:#ffffff;border:1.5px solid #e1dfdd;box-sizing:border-box;"></div>
<div class="r" style="left:1082.4px;top:872.0px;width:386.1px;height:60.0px;background:#ffffff;border:1.5px solid #e1dfdd;box-sizing:border-box;"></div>
<div class="r" style="left:646.5px;top:986.0px;width:386.9px;height:59.3px;background:#ffffff;border:1.5px solid #e1dfdd;box-sizing:border-box;"></div>
<div class="r" style="left:1082.4px;top:986.0px;width:386.1px;height:59.3px;background:#ffffff;border:1.5px solid #e1dfdd;box-sizing:border-box;"></div>
<div class="r" style="left:1082.4px;top:1099.4px;width:386.1px;height:59.4px;background:#ffffff;border:1.5px solid #e1dfdd;box-sizing:border-box;"></div>
<div class="t" style="left:667.1px;top:890.8px;font-size:24.13px;color:#3b3a39;transform:scaleX(0.964);">Measure</div>
<div class="t" style="left:1102.3px;top:890.8px;font-size:24.13px;color:#3b3a39;transform:scaleX(1.007);">Data Input</div>
<div class="t" style="left:667.4px;top:1004.3px;font-size:24.13px;color:#3b3a39;transform:scaleX(0.937);">Sum of Sales</div>
<div class="t" style="left:1103.4px;top:1004.3px;font-size:24.13px;color:#3b3a39;transform:scaleX(0.982);">Static</div>
<div class="t" style="left:1094.4px;top:1118.6px;font-size:27.61px;font-family:'Liberation Mono',monospace;color:#3b3a39;transform:scaleX(0.886);">700000</div>
<div class="r" style="left:1056.5px;top:819.5px;width:1.5px;height:339.3px;background:#e6e6e6;"></div>
<div class="r" style="left:1400.4px;top:1199.7px;width:137.4px;height:53.4px;background:#f3f3f3;"></div>
<div class="t" style="left:1435.2px;top:1215.7px;font-size:22.53px;color:#323130;transform:scaleX(0.963);-webkit-text-stroke:0.8px #323130;">Cancel</div>
<div class="r" style="left:1557.9px;top:1200.0px;width:137.8px;height:53.4px;background:#0078d4;"></div>
<div class="t" style="left:1590.3px;top:1215.7px;font-size:22.53px;color:#ffffff;-webkit-text-stroke:0.8px #ffffff;">Update</div>
<svg class="r" style="left:0;top:0" width="1760" height="1300" viewBox="0 0 1760 1300" fill="none"><line x1="1672" y1="718" x2="1695.5" y2="741.5" stroke="#333" stroke-width="2.2"/><line x1="1695.5" y1="718" x2="1672" y2="741.5" stroke="#333" stroke-width="2.2"/><polyline points="987,894.5 999.2,907.4 1011.4,894.5" stroke="#444" stroke-width="2" fill="none"/><polyline points="1422.8,894.6 1435.1,907.5 1447.4,894.6" stroke="#444" stroke-width="2" fill="none"/><polyline points="987,1008 999.2,1021 1011.4,1008" stroke="#444" stroke-width="2" fill="none"/><polyline points="1422.8,1008 1435.1,1021 1447.4,1008" stroke="#444" stroke-width="2" fill="none"/></svg>
</body></html>
